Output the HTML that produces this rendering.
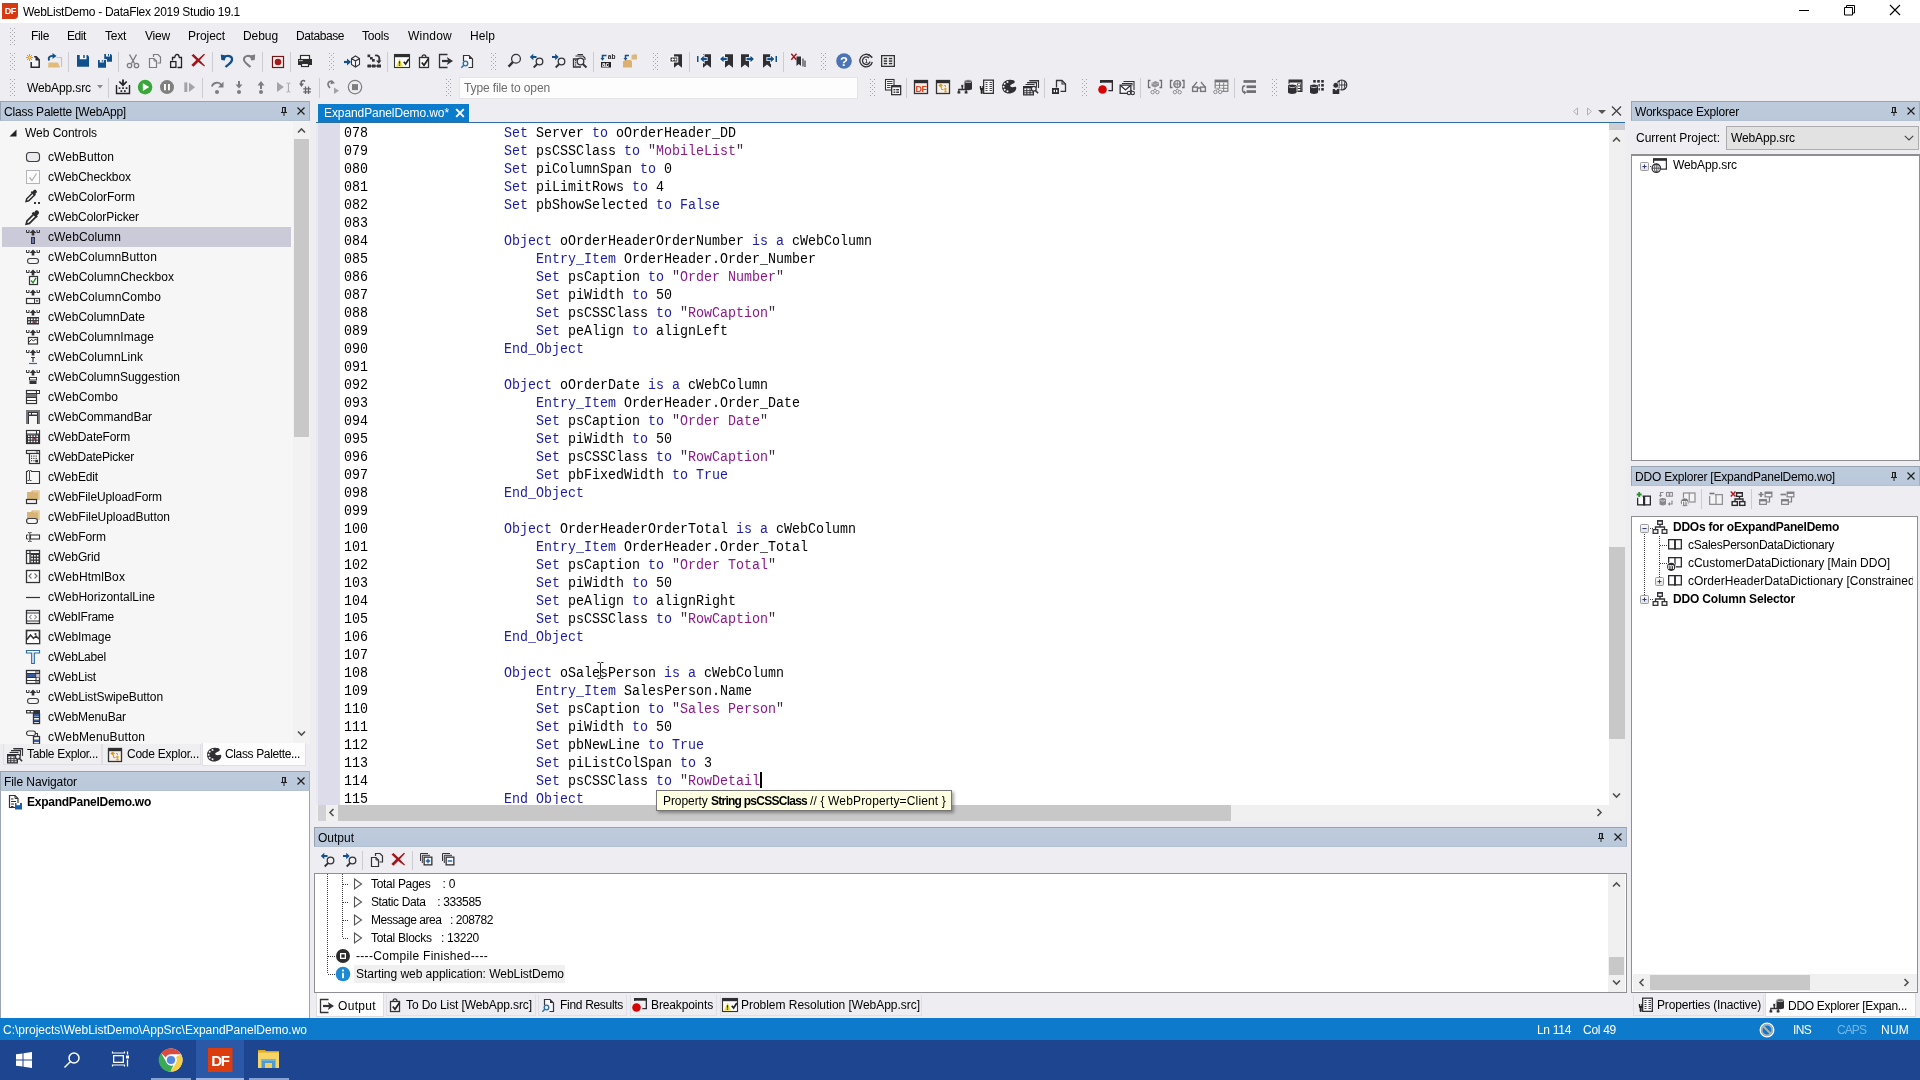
<!DOCTYPE html>
<html lang="en"><head><meta charset="utf-8"><title>WebListDemo - DataFlex 2019 Studio 19.1</title>
<style>
html,body{margin:0;padding:0;}
body{width:1920px;height:1080px;overflow:hidden;position:relative;background:#eeeef2;font-family:"Liberation Sans",sans-serif;font-size:12px;color:#000;}
#app{position:absolute;left:0;top:0;width:1920px;height:1080px;will-change:transform;}
.b{position:absolute;box-sizing:border-box;}
.t{position:absolute;white-space:pre;color:#000;}
.i{position:absolute;overflow:visible;}
.m{position:absolute;white-space:pre;font-family:"Liberation Mono",monospace;}
.code{font-family:"Liberation Mono",monospace;font-size:13.333px;line-height:18px;white-space:pre;color:#000;}
.ln{height:18px;transform:scaleY(1.12);transform-origin:0 12.6px;}
.k{color:#1c1ca0;}
.q{color:#3a2a3a;}
.s{color:#8a1a8a;}
.hdr{background:linear-gradient(#becbdd,#b9c8da);border:1px solid #98a3b1;border-bottom-color:#b3c0d0;border-right-color:#a4afbe;}
.grip{position:absolute;}
.sep{position:absolute;width:1px;background:#cbcbd1;}
</style></head>
<body>
<div id="app">
<svg width="0" height="0" style="position:absolute"><defs><pattern id="gp" width="4" height="4" patternUnits="userSpaceOnUse"><rect x="0" y="0" width="1" height="1" fill="#a4a4aa"/><rect x="2" y="2" width="1" height="1" fill="#a4a4aa"/></pattern></defs></svg>
<div class="b" style="left:0px;top:0px;width:1920px;height:23px;background:#fff;"></div>
<svg class="i" style="left:2.0px;top:3.0px;" width="16" height="16" viewBox="0 0 16 16"><path d="M0 0h16v12.500c0 2-1.500 3.500-3.500 3.500h-12.500z" fill="#d63a12"/><text x="8.200" y="10.800" font-family="Liberation Sans, sans-serif" font-size="9" font-weight="bold" fill="#fff" text-anchor="middle" letter-spacing="-.6">DF</text></svg>
<span class="t" style="left:23px;top:3.84px;font-size:12px;line-height:16px;letter-spacing:-0.279px;">WebListDemo - DataFlex 2019 Studio 19.1</span>
<svg class="i" style="left:1780px;top:0" width="140" height="23" viewBox="0 0 140 23"><path d="M19 10.5h10" stroke="#000" stroke-width="1" fill="none"/><path d="M64.5 7.5h8v7.500h-8z M66.500 7.500v-2h8v7.500h-2" stroke="#000" stroke-width="1" fill="none"/><path d="M110 5l10 10M120 5l-10 10" stroke="#000" stroke-width="1.1" fill="none"/></svg>
<svg class="grip" style="left:10px;top:28px" width="5" height="17"><rect width="5" height="17" fill="url(#gp)"/></svg>
<span class="t" style="left:31px;top:27.84px;font-size:12px;line-height:16px;letter-spacing:-0.334px;">File</span>
<span class="t" style="left:67px;top:27.84px;font-size:12px;line-height:16px;letter-spacing:-0.419px;">Edit</span>
<span class="t" style="left:105px;top:27.84px;font-size:12px;line-height:16px;letter-spacing:-0.252px;">Text</span>
<span class="t" style="left:145px;top:27.84px;font-size:12px;line-height:16px;letter-spacing:-0.198px;">View</span>
<span class="t" style="left:188px;top:27.84px;font-size:12px;line-height:16px;letter-spacing:-0.050px;">Project</span>
<span class="t" style="left:243px;top:27.84px;font-size:12px;line-height:16px;letter-spacing:-0.072px;">Debug</span>
<span class="t" style="left:296px;top:27.84px;font-size:12px;line-height:16px;letter-spacing:-0.421px;">Database</span>
<span class="t" style="left:362px;top:27.84px;font-size:12px;line-height:16px;letter-spacing:-0.203px;">Tools</span>
<span class="t" style="left:408px;top:27.84px;font-size:12px;line-height:16px;letter-spacing:0.220px;">Window</span>
<span class="t" style="left:470px;top:27.84px;font-size:12px;line-height:16px;letter-spacing:0.080px;">Help</span>
<svg class="grip" style="left:10px;top:53px" width="5" height="17"><rect width="5" height="17" fill="url(#gp)"/></svg>
<svg class="i" style="left:25.0px;top:53.0px;" width="16" height="16" viewBox="0 0 16 16"><path d="M6.200 9v5.300h8v-7.500l-3-3h-2" stroke="#26262c" stroke-width="1.5" fill="#f4f4f8" /><path d="M10.500 3.500l4 4h-4z" fill="#26262c"/><path d="M4.5 1.0v7M1.0 4.5h7M2.0 2.0l5 5M7.0 2.0l-5 5" stroke="#d9952a" stroke-width="1" fill="none" /><circle cx="4.5" cy="4.5" r="1" fill="#fff3d0"/></svg>
<svg class="i" style="left:47.0px;top:53.0px;" width="16" height="16" viewBox="0 0 16 16"><path d="M9.500 4.500h5v9.500" stroke="#d9c09a" stroke-width="1.2" fill="none" /><path d="M1.500 9.500h9.500l2 5h-12z" fill="#e0bb7a"/><path d="M2.300 7.500c-2-3.500 1.500-5 4.500-4.500" stroke="#10508f" stroke-width="1.8" fill="none" /><path d="M5.500 0l4 3l-4 3z" fill="#10508f"/></svg>
<div class="sep" style="left:68px;top:52px;height:20px"></div>
<svg class="i" style="left:75.0px;top:53.0px;" width="16" height="16" viewBox="0 0 16 16"><path d="M2 2h10.500l1.500 1.500v10.300h-12z" fill="#10508f"/><rect x="4.75" y="2" width="6.75" height="4.25" fill="#f4f6fa"/><rect x="8.25" y="2" width="1.5" height="3" fill="#10508f"/></svg>
<svg class="i" style="left:97.0px;top:53.0px;" width="16" height="16" viewBox="0 0 16 16"><path d="M7.250 1h6.500l1.250 1.250v6.500h-7.750z" fill="#10508f"/><rect x="9" y="1" width="4" height="2.5" fill="#f4f6fa"/><rect x="11" y="1" width="1" height="1.8" fill="#10508f"/><path d="M.5 6.500h9v8.500" stroke="#eeeef2" stroke-width="1" fill="none" /><path d="M1 7h6.750l1.250 1.250v6.500h-8z" fill="#10508f"/><rect x="2.75" y="7" width="4" height="2.5" fill="#f4f6fa"/><rect x="4.75" y="7" width="1" height="1.8" fill="#10508f"/></svg>
<div class="sep" style="left:118px;top:52px;height:20px"></div>
<svg class="i" style="left:125.0px;top:53.0px;" width="16" height="16" viewBox="0 0 16 16"><path d="M4.500 1.500l5 9M11.500 1.500l-5 9" stroke="#7d7d80" stroke-width="1.4" fill="none" /><circle cx="4.5" cy="12.5" r="2.2" fill="none" stroke="#7d7d80" stroke-width="1.3"/><circle cx="11.5" cy="12.5" r="2.2" fill="none" stroke="#7d7d80" stroke-width="1.3"/></svg>
<svg class="i" style="left:147.0px;top:53.0px;" width="16" height="16" viewBox="0 0 16 16"><path d="M6.500 4v-2.500h4.500l2.500 2.500v6h-3" stroke="#7d7d80" stroke-width="1.2" fill="none" /><path d="M2.500 5.500h4.500l2.500 2.500v6.500h-7z" stroke="#7d7d80" stroke-width="1.2" fill="#f2f2f6" /><path d="M7 5.500v2.500h2.500" stroke="#7d7d80" stroke-width="1" fill="none" /></svg>
<svg class="i" style="left:168.0px;top:53.0px;" width="16" height="16" viewBox="0 0 16 16"><path d="M7 4.500h-2.500v3M11 4.500h2.500v10h-4" stroke="#222226" stroke-width="1.3" fill="none" /><path d="M7 4.500v-1a2 2 0 0 1 4 0v1" stroke="#222226" stroke-width="1.3" fill="none" /><rect x="2.6" y="8.6" width="5.3" height="5.8" fill="none" stroke="#222226" stroke-width="1.3"/></svg>
<svg class="i" style="left:190.0px;top:53.0px;" width="16" height="16" viewBox="0 0 16 16"><path d="M1.500 2.500l2-1.500l5 4.800l5.500-5l1 .8l-5.200 5.700l5.200 5.500l-.8.800l-6-4.700l-4.700 4.800l-2.200-1.700l5-5z" fill="#a3151a"/></svg>
<div class="sep" style="left:212px;top:52px;height:20px"></div>
<svg class="i" style="left:219.0px;top:53.0px;" width="16" height="16" viewBox="0 0 16 16"><path d="M5 4.500c3.500-3 8.500-1.500 8 2.500c-.4 3-4 4.500-6.500 7" stroke="#10508f" stroke-width="2.2" fill="none" /><path d="M1.800 1.500l5.200 1l-1.200 5l-3.500-.5z" fill="#10508f"/></svg>
<svg class="i" style="left:241.0px;top:53.0px;" width="16" height="16" viewBox="0 0 16 16"><path d="M11 4.500c-3.500-3-8.500-1.500-8 2.500c.4 3 4 4.500 6.500 7" stroke="#7d7d80" stroke-width="2" fill="none" /><path d="M14.200 1.500l-5.200 1l1.200 5l3.500-.5z" fill="#7d7d80"/></svg>
<div class="sep" style="left:262px;top:52px;height:20px"></div>
<svg class="i" style="left:269.0px;top:53.0px;" width="16" height="16" viewBox="0 0 16 16"><rect x="3.5" y="3.5" width="11" height="11" fill="#fbeeee" stroke="#6e1518" stroke-width="1.2"/><circle cx="9" cy="9" r="3.3" fill="#a81a1a"/></svg>
<div class="sep" style="left:290px;top:52px;height:20px"></div>
<svg class="i" style="left:297.0px;top:53.0px;" width="16" height="16" viewBox="0 0 16 16"><rect x="3.5" y="2.5" width="9" height="4" fill="#fff" stroke="#2d2d30" stroke-width="1.2"/><rect x="1" y="6" width="14" height="6" fill="#2d2d30"/><rect x="4.5" y="10.5" width="7" height="3" fill="#fff" stroke="#2d2d30" stroke-width="1.2"/><rect x="2.3" y="7" width="1.2" height="1.2" fill="#fff"/><rect x="4.3" y="7" width="1.2" height="1.2" fill="#fff"/></svg>
<svg class="grip" style="left:329px;top:53px" width="5" height="17"><rect width="5" height="17" fill="url(#gp)"/></svg>
<svg class="i" style="left:344.0px;top:53.0px;" width="16" height="16" viewBox="0 0 16 16"><path d="M0 9h4" stroke="#10508f" stroke-width="2.2" fill="none" /><path d="M3 5.500l4 3.500l-4 3.500z" fill="#10508f"/><path d="M7.500 5.500l4-2.500l4 2.500v6l-4 2.500l-4-2.500z M7.500 5.500l4 2.500l4-2.500M11.500 8v6" stroke="#333337" stroke-width="1.1" fill="#f8f8fa" /></svg>
<svg class="i" style="left:366.0px;top:53.0px;" width="16" height="16" viewBox="0 0 16 16"><rect x="1.5" y="1.5" width="2.7" height="2.7" fill="#333337"/><rect x="4" y="4" width="2.7" height="2.5" fill="#333337"/><rect x="6" y="6" width="2.7" height="2.7" fill="#333337"/><rect x="1.5" y="11.5" width="3.5" height="3" fill="#333337"/><rect x="6" y="11.5" width="3.5" height="3" fill="#333337"/><rect x="11" y="11.5" width="4" height="3" fill="#333337"/><path d="M1.500 13h13" stroke="#333337" stroke-width="1.2" fill="none" /><path d="M9 2.500c4-1 5 2.500 4 5.500" stroke="#333337" stroke-width="1.8" fill="none" /><path d="M10 7.500h5.500l-2.700 3.300z" fill="#333337"/></svg>
<div class="sep" style="left:387px;top:52px;height:20px"></div>
<svg class="i" style="left:394.0px;top:53.0px;" width="16" height="16" viewBox="0 0 16 16"><rect x="0.5" y="1.5" width="15" height="13" fill="#fdfdfd" stroke="#333337" stroke-width="1.1"/><rect x="0.5" y="1.5" width="15" height="2.7" fill="#2d2d30"/><path d="M2 13.500l3.500-8l3.500 8z" fill="#efe33a"/><path d="M5.500 8.300v2.400M5.500 11.600v1.100" stroke="#222" stroke-width="1.3" fill="none" /><path d="M9.800 8.800l1.800 2.200l3.200-5" stroke="#222" stroke-width="1.7" fill="none" /></svg>
<svg class="i" style="left:416.0px;top:53.0px;" width="16" height="16" viewBox="0 0 16 16"><rect x="3.5" y="4.5" width="9" height="10" fill="#f8f8fa" stroke="#333337" stroke-width="1.3"/><path d="M6 4.500c0-3.500 4-3.500 4 0" stroke="#333337" stroke-width="1.3" fill="none" /><path d="M5.800 9.500l2.200 2.800l4.600-6.800" stroke="#222" stroke-width="1.7" fill="none" /></svg>
<svg class="i" style="left:438.0px;top:53.0px;" width="16" height="16" viewBox="0 0 16 16"><path d="M9.500 1.500h-8v13h8" stroke="#333337" stroke-width="1.3" fill="none" /><path d="M4 8h7" stroke="#333337" stroke-width="2.2" fill="none" /><path d="M8.800 4l6.200 4l-6.200 4l1.500-4z" fill="#333337"/></svg>
<svg class="i" style="left:459.0px;top:53.0px;" width="16" height="16" viewBox="0 0 16 16"><path d="M4.500 8v-5.500h5.500l3.500 3.500v8.500h-4" stroke="#333337" stroke-width="1.2" fill="#f8f8fa" /><path d="M10 2.500l3.500 3.500h-3.500z" fill="#333337"/><circle cx="6.5" cy="10.5" r="2.3" fill="#eaf2fb" stroke="#2a6aa8" stroke-width="1.3"/><path d="M4.800 12.200l-2.500 2.500" stroke="#2a6aa8" stroke-width="1.5" fill="none" /></svg>
<svg class="grip" style="left:491px;top:53px" width="5" height="17"><rect width="5" height="17" fill="url(#gp)"/></svg>
<svg class="i" style="left:506.0px;top:53.0px;" width="16" height="16" viewBox="0 0 16 16"><circle cx="10" cy="5.75" r="4.4" fill="none" stroke="#333337" stroke-width="1.3"/><path d="M6.800 9.200l-4.300 4.500" stroke="#333337" stroke-width="2.4" fill="none" /></svg>
<svg class="i" style="left:529.0px;top:53.0px;" width="16" height="16" viewBox="0 0 16 16"><circle cx="10.5" cy="8.5" r="3.3" fill="none" stroke="#333337" stroke-width="1.3"/><path d="M8.200 11l-3.500 3.500" stroke="#333337" stroke-width="1.8" fill="none" /><path d="M3 4h4.500" stroke="#10508f" stroke-width="2" fill="none" /><path d="M4.300 .8l-3.500 3.200l3.500 3.200z" fill="#10508f"/></svg>
<svg class="i" style="left:551.0px;top:53.0px;" width="16" height="16" viewBox="0 0 16 16"><circle cx="10.5" cy="8.5" r="3.3" fill="none" stroke="#333337" stroke-width="1.3"/><path d="M8.200 11l-3.500 3.500" stroke="#333337" stroke-width="1.8" fill="none" /><path d="M1 4h4" stroke="#10508f" stroke-width="2" fill="none" /><path d="M4.200 .8l3.500 3.200l-3.500 3.200z" fill="#10508f"/></svg>
<svg class="i" style="left:572.0px;top:53.0px;" width="16" height="16" viewBox="0 0 16 16"><path d="M5.500 1.500h5.500M3.500 3h7.500l2 2v2" stroke="#333337" stroke-width="1.1" fill="none" /><path d="M9 14h-7.500v-8h5" stroke="#333337" stroke-width="1.3" fill="none" /><rect x="3" y="7" width="1.2" height="1.2" fill="#333337"/><rect x="3" y="9.2" width="1.2" height="1.2" fill="#333337"/><rect x="3" y="11.4" width="1.2" height="1.2" fill="#333337"/><circle cx="8.5" cy="8.5" r="3.3" fill="#eeeef2" stroke="#333337" stroke-width="1.3"/><path d="M10.800 11l3.700 3.500" stroke="#333337" stroke-width="2" fill="none" /></svg>
<div class="sep" style="left:593px;top:52px;height:20px"></div>
<svg class="i" style="left:600.0px;top:53.0px;" width="16" height="16" viewBox="0 0 16 16"><rect x="1" y="9" width="10" height="5.5" fill="#222226"/><text x="2" y="13.6" font-family="Liberation Sans, sans-serif" font-size="6.5" font-weight="bold" fill="#fff" text-anchor="start">ac</text><text x="7.8" y="5.5" font-family="Liberation Sans, sans-serif" font-size="6.5" font-weight="bold" fill="#222226" text-anchor="start">ab</text><path d="M6.500 2.500h-4v3" stroke="#10508f" stroke-width="1.6" fill="none" /><path d="M.5 5l2 2.800l2-2.800z" fill="#10508f"/></svg>
<svg class="i" style="left:622.0px;top:53.0px;" width="16" height="16" viewBox="0 0 16 16"><path d="M9.500 2.500l1.500-1h4v5h-5.500z" fill="#d9b87f"/><path d="M11.500 1.500c.5-1 2.500-1 3 .3" stroke="#e8d9a8" stroke-width="1" fill="none" /><path d="M1 8.500l2-1.500h6l1 1.500v6h-9z" fill="#dcb070"/><path d="M7 2.500h-3.500v3" stroke="#10508f" stroke-width="1.5" fill="none" /><path d="M1.500 5l2 2.600l2-2.600z" fill="#10508f"/></svg>
<svg class="grip" style="left:653px;top:53px" width="5" height="17"><rect width="5" height="17" fill="url(#gp)"/></svg>
<svg class="i" style="left:668.0px;top:53.0px;" width="16" height="16" viewBox="0 0 16 16"><path d="M6 1.250h8v13.500l-4-3.300l-4 3.300z" fill="#2f2f33"/><rect x="2" y="4" width="7.75" height="5" fill="#2f2f33" stroke="#fff" stroke-width="1"/><path d="M3.200 6.500l2-1.800v1.200h1v1.200h-1v1.200z" fill="#fff"/><rect x="6.7" y="5.5" width="1.8" height="2" fill="#fff"/></svg>
<div class="sep" style="left:689px;top:52px;height:20px"></div>
<svg class="i" style="left:696.0px;top:53.0px;" width="16" height="16" viewBox="0 0 16 16"><path d="M7 1.250h8v13.500l-4-3.300l-4 3.300z" fill="#2f2f33"/><path d="M4.25 6l3.500-3.300v2h3.0v2.600h-3.0v2z" stroke="#fff" stroke-width="1.6" fill="#fff" /><path d="M4.25 6l3.500-3.300v2h3.0v2.600h-3.0v2z" fill="#10508f"/><rect x="1" y="3" width="1.5" height="6" fill="#10508f"/></svg>
<svg class="i" style="left:718.0px;top:53.0px;" width="16" height="16" viewBox="0 0 16 16"><path d="M7 1.250h8v13.500l-4-3.300l-4 3.300z" fill="#2f2f33"/><path d="M2 6l3.500-3.300v2h3.25v2.600h-3.25v2z" stroke="#fff" stroke-width="1.6" fill="#fff" /><path d="M2 6l3.500-3.300v2h3.25v2.600h-3.25v2z" fill="#10508f"/></svg>
<svg class="i" style="left:740.0px;top:53.0px;" width="16" height="16" viewBox="0 0 16 16"><path d="M1 1.250h8v13.500l-4-3.300l-4 3.300z" fill="#2f2f33"/><path d="M14 6l-3.500-3.300v2h-4.0v2.600h4.0v2z" stroke="#fff" stroke-width="1.6" fill="#fff" /><path d="M14 6l-3.500-3.300v2h-4.0v2.600h4.0v2z" fill="#10508f"/></svg>
<svg class="i" style="left:762.0px;top:53.0px;" width="16" height="16" viewBox="0 0 16 16"><path d="M1 1.250h8v13.500l-4-3.300l-4 3.300z" fill="#2f2f33"/><path d="M12.4 6l-3.500-3.300v2h-3.6500000000000004v2.600h3.6500000000000004v2z" stroke="#fff" stroke-width="1.6" fill="#fff" /><path d="M12.4 6l-3.500-3.300v2h-3.6500000000000004v2.600h3.6500000000000004v2z" fill="#10508f"/><rect x="13.5" y="3" width="1.5" height="6" fill="#10508f"/></svg>
<div class="sep" style="left:783px;top:52px;height:20px"></div>
<svg class="i" style="left:790.0px;top:53.0px;" width="16" height="16" viewBox="0 0 16 16"><path d="M6.500 3.500h4.500v9.500l-2.200-2l-2.300 2z" fill="#2f2f33"/><path d="M13 5.500v8M15 7.500v6.500" stroke="#2f2f33" stroke-width="1.1" fill="none" /><path d="M1.300 .8l5 6M6.500 .8l-5.200 6" stroke="#a3151a" stroke-width="1.4" fill="none" /></svg>
<svg class="grip" style="left:821px;top:53px" width="5" height="17"><rect width="5" height="17" fill="url(#gp)"/></svg>
<svg class="i" style="left:836.0px;top:53.0px;" width="16" height="16" viewBox="0 0 16 16"><circle cx="8" cy="8" r="7.8" fill="#4a74b4"/><text x="8" y="12.7" font-family="Liberation Sans, sans-serif" font-size="13" font-weight="bold" fill="#fff" text-anchor="middle">?</text></svg>
<svg class="i" style="left:858.0px;top:53.0px;" width="16" height="16" viewBox="0 0 16 16"><path d="M12.500 3a6.300 6.300 0 1 0 1.800 6" stroke="#333337" stroke-width="1.3" fill="none" /><path d="M11 5a3.800 3.800 0 1 0 1 3.500" stroke="#333337" stroke-width="1.3" fill="none" /><path d="M10.500 1.500l3.800 3.200" stroke="#333337" stroke-width="1.6" fill="none" /><text x="8.3" y="10.2" font-family="Liberation Sans, sans-serif" font-size="5.5" font-weight="bold" fill="#333337" text-anchor="middle">1</text></svg>
<svg class="i" style="left:880.0px;top:53.0px;" width="16" height="16" viewBox="0 0 16 16"><rect x="1.65" y="2.65" width="12.7" height="10.7" fill="#fafafc" stroke="#333337" stroke-width="1.3"/><rect x="3.7" y="4.8" width="3.5" height="1.5" fill="#333337"/><rect x="3.7" y="7.3" width="3.5" height="1.5" fill="#333337"/><rect x="3.7" y="9.8" width="3.5" height="1.5" fill="#333337"/><rect x="8.8" y="4.8" width="3.5" height="1.5" fill="#333337"/><rect x="8.8" y="7.3" width="3.5" height="1.5" fill="#333337"/><rect x="8.8" y="9.8" width="3.5" height="1.5" fill="#333337"/></svg>
<svg class="grip" style="left:10px;top:79px" width="5" height="17"><rect width="5" height="17" fill="url(#gp)"/></svg>
<span class="t" style="left:27px;top:79.84px;font-size:12px;line-height:16px;letter-spacing:-0.114px;">WebApp.src</span>
<svg class="i" style="left:97px;top:85px" width="6" height="4" viewBox="0 0 6 4"><path d="M0 0h6l-3 3.5z" fill="#8a8a8a"/></svg>
<div class="sep" style="left:108px;top:78px;height:20px"></div>
<svg class="i" style="left:115.0px;top:79.0px;" width="16" height="16" viewBox="0 0 16 16"><path d="M1.500 6v8.500h13v-8.500" stroke="#222226" stroke-width="1.4" fill="none" /><path d="M8 .5v5" stroke="#222226" stroke-width="1.8" fill="none" /><path d="M4.300 2.500l3.700 3.700l3.700-3.700" stroke="#222226" stroke-width="1.7" fill="none" /><rect x="3.7" y="8.3" width="1.7" height="1.7" fill="#222226"/><rect x="7.2" y="8.3" width="1.7" height="1.7" fill="#222226"/><rect x="10.7" y="8.3" width="1.7" height="1.7" fill="#222226"/><rect x="5.5" y="11.2" width="1.7" height="1.7" fill="#222226"/><rect x="9" y="11.2" width="1.7" height="1.7" fill="#222226"/></svg>
<svg class="i" style="left:137.0px;top:79.0px;" width="16" height="16" viewBox="0 0 16 16"><circle cx="8.1" cy="8.1" r="7.3" fill="#39a639"/><path d="M5.800 4.200l6.400 3.900l-6.400 3.900z" fill="#fff"/></svg>
<svg class="i" style="left:159.0px;top:79.0px;" width="16" height="16" viewBox="0 0 16 16"><circle cx="8" cy="8.1" r="7" fill="#7f7f7f"/><rect x="5" y="5" width="1.9" height="6.3" fill="#fff"/><rect x="9" y="5" width="1.9" height="6.3" fill="#fff"/></svg>
<svg class="i" style="left:181.0px;top:79.0px;" width="16" height="16" viewBox="0 0 16 16"><rect x="3.3" y="3.4" width="3" height="9.6" fill="#a4a4a7"/><path d="M8 3.400l6 4.800l-6 4.800z" fill="#a4a4a7"/></svg>
<div class="sep" style="left:202px;top:78px;height:20px"></div>
<svg class="i" style="left:209.0px;top:79.0px;" width="16" height="16" viewBox="0 0 16 16"><path d="M2.800 7.500c1.500-4.500 7.500-5 9.500-1.500" stroke="#7d7d80" stroke-width="1.8" fill="none" /><path d="M14.500 2.500v6h-5.500z" fill="#7d7d80"/><circle cx="8" cy="13.1" r="2" fill="#7d7d80"/></svg>
<svg class="i" style="left:231.0px;top:79.0px;" width="16" height="16" viewBox="0 0 16 16"><path d="M8 2v6" stroke="#7d7d80" stroke-width="2" fill="none" /><path d="M4.500 5.500h7l-3.500 4z" fill="#7d7d80"/><circle cx="8" cy="13.1" r="2" fill="#7d7d80"/></svg>
<svg class="i" style="left:253.0px;top:79.0px;" width="16" height="16" viewBox="0 0 16 16"><path d="M8 5v5" stroke="#7d7d80" stroke-width="2" fill="none" /><path d="M4.500 6.500h7l-3.500-4.500z" fill="#7d7d80"/><circle cx="8" cy="13.1" r="2" fill="#7d7d80"/></svg>
<svg class="i" style="left:276.0px;top:79.0px;" width="16" height="16" viewBox="0 0 16 16"><path d="M1 3l6.800 5l-6.800 5z" fill="#a4a4a7"/><path d="M10.500 4h1.300l.600.600l.600-.600h1.300M12.400 4.500v8M10.500 13h1.300l.600-.600l.600.600h1.300" stroke="#a4a4a7" stroke-width="1" fill="none" /></svg>
<svg class="i" style="left:297.0px;top:79.0px;" width="16" height="16" viewBox="0 0 16 16"><path d="M8.500 7.500v7.500M11.500 7.500v7.500M6.250 9.800h7.750M6.250 12.800h7.750" stroke="#66666a" stroke-width="1.3" fill="none" /><path d="M8 2.500c-1.500-2-5-.5-3.500 3" stroke="#66666a" stroke-width="1.5" fill="none" /><path d="M2 4.500h5l-2.500 3.500z" fill="#66666a"/></svg>
<div class="sep" style="left:319px;top:78px;height:20px"></div>
<svg class="i" style="left:324.0px;top:79.0px;" width="16" height="16" viewBox="0 0 16 16"><path d="M9 3.500c-3-3-7.500.5-3 5.500" stroke="#7d7d80" stroke-width="1.7" fill="none" /><path d="M7.500 .8l3.500 3.500l-4.500 1z" fill="#7d7d80"/><path d="M10 8.500l5 3.300l-5 3.300z" fill="#a4a4a7"/></svg>
<svg class="i" style="left:347.0px;top:79.0px;" width="16" height="16" viewBox="0 0 16 16"><circle cx="8" cy="8.1" r="6.7" fill="none" stroke="#7d7d80" stroke-width="1.2"/><rect x="5" y="5.1" width="6" height="6" fill="#7d7d80"/></svg>
<svg class="grip" style="left:446px;top:79px" width="5" height="17"><rect width="5" height="17" fill="url(#gp)"/></svg>
<svg class="grip" style="left:870px;top:79px" width="5" height="17"><rect width="5" height="17" fill="url(#gp)"/></svg>
<svg class="i" style="left:885.0px;top:79.0px;" width="16" height="16" viewBox="0 0 16 16"><rect x="0.5" y="0.5" width="8.5" height="10.5" fill="#fafafc" stroke="#333337" stroke-width="1.1"/><path d="M2 2.500h5.500M2 4.500h5.500M2 6.500h3.500M2 8.500h3.500" stroke="#444448" stroke-width="1" fill="none" /><rect x="6.65" y="6.65" width="9" height="9" fill="#fafafc" stroke="#333337" stroke-width="1.3"/><rect x="6.65" y="6.65" width="9" height="1.7" fill="#333337"/><rect x="8.5" y="10" width="1.8" height="1.4" fill="#333337"/><rect x="11.2" y="10" width="2.8" height="1.4" fill="#333337"/><rect x="8.5" y="12.5" width="1.8" height="1.4" fill="#333337"/><rect x="11.2" y="12.5" width="2.8" height="1.4" fill="#333337"/></svg>
<div class="sep" style="left:906px;top:78px;height:20px"></div>
<svg class="i" style="left:913.0px;top:79.0px;" width="16" height="16" viewBox="0 0 16 16"><rect x="1.5" y="1.5" width="13" height="13" fill="#fbe9e4" stroke="#333337" stroke-width="1.3"/><rect x="1.5" y="1.5" width="13" height="2.7" fill="#2d2d30"/><text x="8" y="12.800" font-family="Liberation Sans, sans-serif" font-size="9" font-weight="bold" fill="#d9431e" text-anchor="middle" letter-spacing="-.6">DF</text></svg>
<svg class="i" style="left:935.0px;top:79.0px;" width="16" height="16" viewBox="0 0 16 16"><rect x="1.5" y="1.5" width="13" height="13" fill="#f8efe6" stroke="#333337" stroke-width="1.3"/><rect x="1.5" y="1.5" width="13" height="2.7" fill="#2d2d30"/><path d="M3.500 6.500l2-2l2.500 2l-2.500 2z" fill="#d19a2a"/><path d="M8.500 10l2-1.500l1.500 1.500l-1.500 1.500z" fill="#d6a83c"/><path d="M6.500 8v2.500h2M10.500 8v-1.500h-1.500M10.500 11.500v1.500" stroke="#c9a04a" stroke-width="1" fill="none" /><circle cx="10.5" cy="12.5" r="1.2" fill="#d6a83c"/></svg>
<svg class="i" style="left:957.0px;top:79.0px;" width="16" height="16" viewBox="0 0 16 16"><path d="M7.500 2v8c0 1.500 7.500 1.500 7.500 0v-8z" fill="#2f2f33"/><ellipse cx="11.250" cy="2.200" rx="3.700" ry="1.400" fill="#606064" stroke="#eeeef2" stroke-width=".6"/><rect x="4" y="5.7" width="2.6" height="2.6" fill="#2f2f33" stroke="#eeeef2" stroke-width="0.6"/><path d="M5.300 8v2.500M1.800 13v-2.500h7.400v2.500" stroke="#2f2f33" stroke-width="1.3" fill="none" /><rect x="0.5" y="12.3" width="2.8" height="2.2" fill="#2f2f33"/><rect x="7.7" y="12.3" width="2.8" height="2.2" fill="#2f2f33"/></svg>
<svg class="i" style="left:979.0px;top:79.0px;" width="16" height="16" viewBox="0 0 16 16"><rect x="4.65" y="1.15" width="9.7" height="13.2" fill="#fafafc" stroke="#333337" stroke-width="1.3"/><path d="M6.500 3.500h2M10.500 3.500h2.500M6.500 5.500h2M10.500 5.500h2.500M6.500 7.500h2M10.500 7.500h2.500M6.500 9.500h2M10.500 9.500h2.500M6.500 11.500h2M10.500 11.500h2.500" stroke="#444448" stroke-width="1" fill="none" /><path d="M1.500 7v2.500M4 7v2.500" stroke="#222" stroke-width="1.4" fill="none" /><path d="M1 9h3.500v1.500l-.800.800v3.200l-1 .5l-1-.5v-3.200l-.700-.800z" fill="#222"/></svg>
<svg class="i" style="left:1001.0px;top:79.0px;" width="16" height="16" viewBox="0 0 16 16"><path d="M8.500 .8c3 0 5.500.7 5.300 2.200c-.2 1.500-2.500 1.800-4.300 3c-1 1 .5 2.300 2 2.300c1.500 0 3.800-1.500 3.800 .8c0 3-3.300 5.500-7.300 5.500c-4 0-7-3-7-6.900c0-3.900 3.500-6.900 7.500-6.900z" fill="#303034"/><circle cx="6.5" cy="3" r="1" fill="#f2f2f6"/><circle cx="3.7" cy="4.8" r="1" fill="#f2f2f6"/><circle cx="2.6" cy="7.8" r="1" fill="#f2f2f6"/><circle cx="3.7" cy="10.7" r="1" fill="#f2f2f6"/><circle cx="6.5" cy="12.3" r="1" fill="#f2f2f6"/></svg>
<svg class="i" style="left:1023.0px;top:79.0px;" width="16" height="16" viewBox="0 0 16 16"><path d="M6.500 1.500h9v7.500M4 3.500h9.500v5M2.500 5.500h9" stroke="#333337" stroke-width="1.1" fill="none" /><rect x="6.5" y="1" width="9.5" height="1.5" fill="#333337"/><rect x="4" y="3" width="10" height="1.3" fill="#333337"/><rect x="0.65" y="7.65" width="9.7" height="8.2" fill="#fafafc" stroke="#333337" stroke-width="1.3"/><rect x="0.65" y="7.15" width="9.7" height="2.2" fill="#2d2d30"/><path d="M.650 11.700h9.700M.650 13.800h9.700M3.800 9.500v6.500M7 9.500v6.500" stroke="#333337" stroke-width="1" fill="none" /><circle cx="10.8" cy="9.8" r="2.4" fill="#eeeef2" stroke="#333337" stroke-width="1.2"/><path d="M12.500 11.500l2.600 2.800" stroke="#333337" stroke-width="1.6" fill="none" /></svg>
<div class="sep" style="left:1044px;top:78px;height:20px"></div>
<svg class="i" style="left:1051.0px;top:79.0px;" width="16" height="16" viewBox="0 0 16 16"><path d="M5.500 8.500v-7h5.500l3.500 3.500v7.300h-5" stroke="#333337" stroke-width="1.3" fill="none" /><path d="M11 1.500v3.500h3.500" stroke="#333337" stroke-width="1.1" fill="none" /><rect x="1" y="9" width="7" height="6" fill="#2d2d30"/><path d="M4 10.500v3l-2-1.500z" fill="#fff"/><path d="M5 10.500v3l2-1.500z" fill="#fff"/></svg>
<svg class="grip" style="left:1082px;top:79px" width="5" height="17"><rect width="5" height="17" fill="url(#gp)"/></svg>
<svg class="i" style="left:1097.0px;top:79.0px;" width="16" height="16" viewBox="0 0 16 16"><path d="M3.650 4v-2.350h11.700v10h-4" stroke="#2d2d30" stroke-width="1.3" fill="none" /><rect x="3" y="1" width="13" height="2.7" fill="#2d2d30"/><circle cx="5.5" cy="10.5" r="4.3" fill="#d60505"/></svg>
<svg class="i" style="left:1119.0px;top:79.0px;" width="16" height="16" viewBox="0 0 16 16"><path d="M4.500 2.500h10.500v8.500M3 4.500h10v2" stroke="#333337" stroke-width="1.1" fill="none" /><rect x="1.15" y="6.15" width="10.7" height="8.2" fill="#fafafc" stroke="#333337" stroke-width="1.3"/><path d="M1.500 6.500l5 4.500l5-4.500" stroke="#333337" stroke-width="1.3" fill="none" /><circle cx="10" cy="14" r="1.7" fill="#eeeef2" stroke="#333337" stroke-width="1.1"/><circle cx="13.7" cy="14" r="1.7" fill="#eeeef2" stroke="#333337" stroke-width="1.1"/><path d="M10.500 12.300l1.300-1.300l1.300 1.300" stroke="#333337" stroke-width="1" fill="none" /></svg>
<div class="sep" style="left:1140px;top:78px;height:20px"></div>
<svg class="i" style="left:1147.0px;top:79.0px;" width="16" height="16" viewBox="0 0 16 16"><path d="M3.500 1.500h-2v7h2M12.500 1.500h2v7h-2" stroke="#6e6e72" stroke-width="1.3" fill="none" /><path d="M4.500 4l4-2l3.500 1.500v3l-4 2l-3.500-1.500z" fill="#909094"/><path d="M4.500 4l3.500 1.500l4-2" stroke="#c8c8cc" stroke-width="0.7" fill="none" /><circle cx="5.6" cy="13.2" r="1.7" fill="none" stroke="#8c8c90" stroke-width="1"/><circle cx="10.4" cy="13.2" r="1.7" fill="none" stroke="#8c8c90" stroke-width="1"/><path d="M6.5 11.7l1.500-2l1.500 2" stroke="#8c8c90" stroke-width="1" fill="none" /></svg>
<svg class="i" style="left:1169.0px;top:79.0px;" width="16" height="16" viewBox="0 0 16 16"><path d="M3.500 1.500h-2v7h2M13 1.500h2v7h-2" stroke="#6e6e72" stroke-width="1.3" fill="none" /><circle cx="8.25" cy="5" r="3.5" fill="none" stroke="#7a7a7e" stroke-width="1.1"/><path d="M4.750 5h7M8.250 1.500v7M6.500 2c-.8 2-.8 4 0 6M10 2c.8 2 .8 4 0 6" stroke="#7a7a7e" stroke-width="0.9" fill="none" /><circle cx="5.85" cy="13.2" r="1.7" fill="none" stroke="#8c8c90" stroke-width="1"/><circle cx="10.65" cy="13.2" r="1.7" fill="none" stroke="#8c8c90" stroke-width="1"/><path d="M6.75 11.7l1.500-2l1.500 2" stroke="#8c8c90" stroke-width="1" fill="none" /></svg>
<svg class="i" style="left:1191.0px;top:79.0px;" width="16" height="16" viewBox="0 0 16 16"><rect x="1.6" y="8.1" width="4.8" height="4.3" fill="none" stroke="#77777b" stroke-width="1.4"/><rect x="9.6" y="8.1" width="4.8" height="4.3" fill="none" stroke="#77777b" stroke-width="1.4"/><path d="M6.400 9h3.200M1.500 8.500l4.500-5.500M14.500 8.500l-4.500-5.500" stroke="#77777b" stroke-width="1.3" fill="none" /></svg>
<svg class="i" style="left:1213.0px;top:79.0px;" width="16" height="16" viewBox="0 0 16 16"><rect x="2.15" y="1.15" width="12.7" height="11.2" fill="#f6f6f8" stroke="#808084" stroke-width="1.2"/><rect x="2.15" y="1.15" width="12.7" height="2.2" fill="#707074"/><path d="M2 6.300h13M2 9.300h13M6.500 3.500v9M10.700 3.500v9" stroke="#808084" stroke-width="1" fill="none" /><rect x="0.5" y="9.5" width="8.5" height="5.5" fill="#eeeef2"/><circle cx="2.4" cy="13" r="1.7" fill="none" stroke="#8c8c90" stroke-width="1"/><circle cx="7.199999999999999" cy="13" r="1.7" fill="none" stroke="#8c8c90" stroke-width="1"/><path d="M3.3 11.5l1.500-2l1.500 2" stroke="#8c8c90" stroke-width="1" fill="none" /></svg>
<div class="sep" style="left:1234px;top:78px;height:20px"></div>
<svg class="i" style="left:1241.0px;top:79.0px;" width="16" height="16" viewBox="0 0 16 16"><rect x="2.5" y="1.1" width="12.5" height="2.7" fill="#6e6e72"/><rect x="5.5" y="6.4" width="9.5" height="2.7" fill="#6e6e72"/><rect x="5.5" y="11.25" width="9.5" height="2.7" fill="#6e6e72"/><path d="M4.200 7h-1c-1.700 0-1.700 1.500-1.700 3.500c0 2 .5 3 2 3" stroke="#6e6e72" stroke-width="1.4" fill="none" /><path d="M3 11.500l2.500 2l-2.500 2z" fill="#6e6e72"/></svg>
<svg class="grip" style="left:1272px;top:79px" width="5" height="17"><rect width="5" height="17" fill="url(#gp)"/></svg>
<svg class="i" style="left:1287.0px;top:79.0px;" width="16" height="16" viewBox="0 0 16 16"><rect x="2.15" y="1.15" width="12.7" height="11.2" fill="#fafafc" stroke="#2f2f33" stroke-width="1.3"/><rect x="2.15" y="1.15" width="12.7" height="2.4" fill="#2f2f33"/><rect x="10" y="4.5" width="4" height="7.5" fill="#2f2f33"/><rect x="10.8" y="5" width="2.5" height="1.5" fill="#fff"/><rect x="10.8" y="7.5" width="2.5" height="1.5" fill="#fff"/><rect x="10.8" y="10" width="2.5" height="1.5" fill="#fff"/><path d="M.5 6.500c0-2.500 9.500-2.500 9.500 0v7" stroke="#eeeef2" stroke-width="1" fill="none" /><path d="M1 6.9v6.7c0 1.800 8.5 1.800 8.5 0v-6.7z" fill="#2f2f33"/><ellipse cx="5.25" cy="7.0" rx="4.25" ry="1.500" fill="#2f2f33"/><path d="M1.8 7.7c1.500 1.200 5.4 1.200 6.9 0" stroke="#d8d8dc" stroke-width=".9" fill="none"/></svg>
<svg class="i" style="left:1309.0px;top:79.0px;" width="16" height="16" viewBox="0 0 16 16"><rect x="4.2" y="1" width="2.6" height="2.6" fill="#2f2f33"/><rect x="8.2" y="1" width="2.6" height="2.6" fill="#2f2f33"/><rect x="12.2" y="1" width="2.6" height="2.6" fill="#2f2f33"/><rect x="12.2" y="5" width="2.6" height="2.6" fill="#2f2f33"/><rect x="12.2" y="9" width="2.6" height="2.6" fill="#2f2f33"/><rect x="9.5" y="5" width="1.3" height="2.6" fill="#2f2f33"/><rect x="9.5" y="9" width="1.3" height="2.6" fill="#2f2f33"/><path d="M1 6.9v6.7c0 1.800 8 1.800 8 0v-6.7z" fill="#2f2f33"/><ellipse cx="5.0" cy="7.0" rx="4.0" ry="1.500" fill="#2f2f33"/><path d="M1.8 7.7c1.500 1.200 4.9 1.200 6.4 0" stroke="#d8d8dc" stroke-width=".9" fill="none"/></svg>
<svg class="i" style="left:1331.0px;top:79.0px;" width="16" height="16" viewBox="0 0 16 16"><circle cx="10.8" cy="6" r="5" fill="#f6f6f8" stroke="#2f2f33" stroke-width="1.2"/><path d="M5.800 6h10M10.800 1v10M8.800 1.500c-1.200 2.800-1.200 6.200 0 9M12.800 1.500c1.200 2.800 1.200 6.200 0 9" stroke="#2f2f33" stroke-width="0.9" fill="none" /><circle cx="4.8" cy="6.3" r="2.9" fill="#2f2f33" stroke="#eeeef2" stroke-width="0.8"/><path d="M1.500 15v-5h2.200l1.300 1.800l1.300-1.800h2.200v5z" fill="#2f2f33"/><path d="M1 15.500v-6h8v6" stroke="#eeeef2" stroke-width="0.8" fill="none" /></svg>
<div class="b" style="left:459px;top:77px;width:399px;height:22px;background:#fdfdfd;border:1px solid #e3e3e8;"></div>
<span class="t" style="left:464px;top:79.84px;font-size:12px;line-height:16px;letter-spacing:-0.121px;color:#6d6d6d;">Type file to open</span>
<div class="b hdr" style="left:0px;top:101px;width:310px;height:20px;"></div>
<span class="t" style="left:4px;top:103.84px;font-size:12px;line-height:16px;letter-spacing:-0.205px;">Class Palette [WebApp]</span>
<svg class="i" style="left:279.0px;top:106.0px;" width="10" height="10" viewBox="0 0 10 10"><path d="M3.5 1.5v4.5M6.5 1.5v4.5M3 1.5h4M2 6.5h6M5 6.5v3.5" stroke="#1e1e1e" stroke-width="1" fill="none" /><rect x="5.5" y="1.5" width="1.3" height="4.5" fill="#1e1e1e"/></svg>
<svg class="i" style="left:295.5px;top:105.5px;" width="10" height="10" viewBox="0 0 10 10"><path d="M1.5 1.5l7 7M8.5 1.5l-7 7" stroke="#1e1e1e" stroke-width="1.2" fill="none" /></svg>
<div class="b" style="left:0px;top:121px;width:310px;height:623px;background:#f6f6f6;"></div>
<svg class="i" style="left:8px;top:128px" width="10" height="10" viewBox="0 0 10 10"><path d="M8.5 1.5v7h-7z" fill="#222"/></svg>
<span class="t" style="left:25px;top:124.84px;font-size:12px;line-height:16px;letter-spacing:-0.040px;">Web Controls</span>
<div class="b" style="left:2px;top:227px;width:289px;height:20px;background:#cbcad9;"></div>
<svg class="i" style="left:25.0px;top:149.0px;" width="16" height="16" viewBox="0 0 16 16"><rect x="1.5" y="3.5" width="13" height="9" rx="3" fill="#ececf0" stroke="#3e3e42" stroke-width="1.100"/></svg>
<span class="t" style="left:48px;top:148.84px;font-size:12px;line-height:16px;letter-spacing:0.085px;">cWebButton</span>
<svg class="i" style="left:25.0px;top:169.0px;" width="16" height="16" viewBox="0 0 16 16"><rect x="1.5" y="1.5" width="13" height="13" fill="#fbfbfb" stroke="#b4b4b8" stroke-width="1"/><path d="M4.500 8.500l2.500 3l4.500-7" stroke="#b0b0b4" stroke-width="1.2" fill="none" /></svg>
<span class="t" style="left:48px;top:168.84px;font-size:12px;line-height:16px;letter-spacing:-0.068px;">cWebCheckbox</span>
<svg class="i" style="left:25.0px;top:189.0px;" width="16" height="16" viewBox="0 0 16 16"><g transform="translate(0 0) scale(0.85)"><path d="M10.300 1.300c1.800-1.800 5 1.400 3.200 3.200l-1.500 1.500l.9.9l-1.600 1.600l-4.600-4.600l1.600-1.600l.9.9z" fill="#2a2a2e"/><path d="M8.300 5.200l-6.300 6.300l-.8 3.200l3.200-.8l6.300-6.300" stroke="#2a2a2e" stroke-width="1.7" fill="none" /></g><rect x="9" y="13" width="2" height="2" fill="#333337"/><rect x="13" y="13" width="2" height="2" fill="#333337"/></svg>
<span class="t" style="left:48px;top:188.84px;font-size:12px;line-height:16px;letter-spacing:-0.010px;">cWebColorForm</span>
<svg class="i" style="left:25.0px;top:209.0px;" width="16" height="16" viewBox="0 0 16 16"><g transform="translate(0 0.5) scale(1)"><path d="M10.300 1.300c1.800-1.800 5 1.400 3.200 3.200l-1.500 1.500l.9.9l-1.600 1.600l-4.600-4.600l1.600-1.600l.9.9z" fill="#2a2a2e"/><path d="M8.300 5.200l-6.300 6.300l-.8 3.200l3.200-.8l6.300-6.300" stroke="#2a2a2e" stroke-width="1.7" fill="none" /></g></svg>
<span class="t" style="left:48px;top:208.84px;font-size:12px;line-height:16px;letter-spacing:-0.098px;">cWebColorPicker</span>
<svg class="i" style="left:25.0px;top:229.0px;" width="16" height="16" viewBox="0 0 16 16"><path d="M1.5 1v2.5h2.500v-2.500M12 1v2.500h2.500v-2.500" stroke="#333337" stroke-width="1" fill="none" /><path d="M8 .5l3.500 3.500h-2.200v2.500h-2.600v-2.500h-2.200z" fill="#333337"/><rect x="6.5" y="8.5" width="3" height="6" fill="#6c78b4" stroke="#333337" stroke-width="1"/></svg>
<span class="t" style="left:48px;top:228.84px;font-size:12px;line-height:16px;letter-spacing:0.119px;">cWebColumn</span>
<svg class="i" style="left:25.0px;top:249.0px;" width="16" height="16" viewBox="0 0 16 16"><path d="M1.5 1v2.5h2.500v-2.500M12 1v2.500h2.500v-2.500" stroke="#333337" stroke-width="1" fill="none" /><path d="M8 .5l3.500 3.500h-2.200v2.500h-2.600v-2.500h-2.200z" fill="#333337"/><rect x="2.5" y="9.500" width="11" height="5" rx="2.500" fill="#f6f6f6" stroke="#3e3e42" stroke-width="1.100"/></svg>
<span class="t" style="left:48px;top:248.84px;font-size:12px;line-height:16px;letter-spacing:0.156px;">cWebColumnButton</span>
<svg class="i" style="left:25.0px;top:269.0px;" width="16" height="16" viewBox="0 0 16 16"><path d="M1.5 1v2.5h2.500v-2.500M12 1v2.500h2.500v-2.500" stroke="#333337" stroke-width="1" fill="none" /><path d="M8 .5l3.500 3.500h-2.200v2.500h-2.600v-2.500h-2.200z" fill="#333337"/><rect x="4.5" y="7.5" width="8" height="8" fill="#fff" stroke="#333337" stroke-width="1.2"/><path d="M6 11.500l2 2.300l3-5" stroke="#2e8b2e" stroke-width="1.4" fill="none" /></svg>
<span class="t" style="left:48px;top:268.84px;font-size:12px;line-height:16px;letter-spacing:0.046px;">cWebColumnCheckbox</span>
<svg class="i" style="left:25.0px;top:289.0px;" width="16" height="16" viewBox="0 0 16 16"><path d="M1.5 1v2.5h2.500v-2.500M12 1v2.500h2.500v-2.500" stroke="#333337" stroke-width="1" fill="none" /><path d="M8 .5l3.500 3.500h-2.200v2.500h-2.600v-2.500h-2.200z" fill="#333337"/><rect x="1.5" y="9.5" width="13" height="5" fill="#fff" stroke="#333337" stroke-width="1.2"/><path d="M9.500 9.500v5" stroke="#333337" stroke-width="1" fill="none" /><path d="M10.500 11.200h3l-1.500 2z" fill="#333337"/></svg>
<span class="t" style="left:48px;top:288.84px;font-size:12px;line-height:16px;letter-spacing:0.167px;">cWebColumnCombo</span>
<svg class="i" style="left:25.0px;top:309.0px;" width="16" height="16" viewBox="0 0 16 16"><path d="M1.5 1v2.5h2.500v-2.500M12 1v2.500h2.500v-2.500" stroke="#333337" stroke-width="1" fill="none" /><path d="M8 .5l3.500 3.500h-2.200v2.500h-2.600v-2.500h-2.200z" fill="#333337"/><rect x="2" y="8" width="12" height="7.5" fill="#333337"/><rect x="3.2" y="9.5" width="1.6" height="1.6" fill="#fff"/><rect x="3.2" y="12.3" width="1.6" height="1.6" fill="#fff"/><rect x="6.0" y="9.5" width="1.6" height="1.6" fill="#fff"/><rect x="6.0" y="12.3" width="1.6" height="1.6" fill="#fff"/><rect x="8.8" y="9.5" width="1.6" height="1.6" fill="#fff"/><rect x="8.8" y="12.3" width="1.6" height="1.6" fill="#fff"/><rect x="11.599999999999998" y="9.5" width="1.6" height="1.6" fill="#fff"/><rect x="11.599999999999998" y="12.3" width="1.6" height="1.6" fill="#fff"/><rect x="8.8" y="12.3" width="1.6" height="1.6" fill="#8a1538"/></svg>
<span class="t" style="left:48px;top:308.84px;font-size:12px;line-height:16px;letter-spacing:-0.011px;">cWebColumnDate</span>
<svg class="i" style="left:25.0px;top:329.0px;" width="16" height="16" viewBox="0 0 16 16"><path d="M1.5 1v2.5h2.500v-2.500M12 1v2.500h2.500v-2.500" stroke="#333337" stroke-width="1" fill="none" /><path d="M8 .5l3.500 3.500h-2.200v2.500h-2.600v-2.500h-2.200z" fill="#333337"/><rect x="3.5" y="8.5" width="9" height="6.5" fill="#fff" stroke="#333337" stroke-width="1.2"/><path d="M4 13l2.500-2.500l2 1.500l2-2l1.500 1.500" stroke="#333337" stroke-width="1" fill="none" /></svg>
<span class="t" style="left:48px;top:328.84px;font-size:12px;line-height:16px;letter-spacing:0.056px;">cWebColumnImage</span>
<svg class="i" style="left:25.0px;top:349.0px;" width="16" height="16" viewBox="0 0 16 16"><path d="M1.5 1v2.5h2.500v-2.500M12 1v2.500h2.500v-2.500" stroke="#333337" stroke-width="1" fill="none" /><path d="M8 .5l3.500 3.500h-2.200v2.500h-2.600v-2.500h-2.200z" fill="#333337"/><path d="M6 8.500h4M8 8.500v4.500" stroke="#333337" stroke-width="1.2" fill="none" /><path d="M4 14.500h8" stroke="#2d6aa8" stroke-width="1.2" fill="none" /></svg>
<span class="t" style="left:48px;top:348.84px;font-size:12px;line-height:16px;letter-spacing:0.084px;">cWebColumnLink</span>
<svg class="i" style="left:25.0px;top:369.0px;" width="16" height="16" viewBox="0 0 16 16"><path d="M1.5 1v2.5h2.500v-2.500M12 1v2.500h2.500v-2.500" stroke="#333337" stroke-width="1" fill="none" /><path d="M8 .5l3.500 3.500h-2.200v2.500h-2.600v-2.500h-2.200z" fill="#333337"/><rect x="4.5" y="8.5" width="7" height="2.5" fill="#fff" stroke="#333337" stroke-width="1"/><rect x="4.5" y="12" width="7" height="3" fill="#333337"/></svg>
<span class="t" style="left:48px;top:368.84px;font-size:12px;line-height:16px;letter-spacing:0.007px;">cWebColumnSuggestion</span>
<svg class="i" style="left:25.0px;top:389.0px;" width="16" height="16" viewBox="0 0 16 16"><rect x="1.5" y="1.5" width="10" height="13" fill="#fff" stroke="#333337" stroke-width="1.2"/><rect x="1.5" y="5" width="10" height="3" fill="#77777b"/><path d="M1.500 4.500h10M1.500 8.500h10M1.500 11.500h10" stroke="#333337" stroke-width="1" fill="none" /><rect x="11.5" y="1.5" width="3" height="3" fill="#fff" stroke="#333337" stroke-width="1"/></svg>
<span class="t" style="left:48px;top:388.84px;font-size:12px;line-height:16px;letter-spacing:0.095px;">cWebCombo</span>
<svg class="i" style="left:25.0px;top:409.0px;" width="16" height="16" viewBox="0 0 16 16"><path d="M2 15v-13h12v13" stroke="#77777b" stroke-width="2" fill="none" /><rect x="3.5" y="3.5" width="9" height="2.5" fill="#fff" stroke="#333337" stroke-width="1"/><path d="M6.500 3.500v2.500" stroke="#333337" stroke-width="1" fill="none" /><path d="M3.500 15v-8.500h9v8.500" stroke="#333337" stroke-width="1" fill="none" /></svg>
<span class="t" style="left:48px;top:408.84px;font-size:12px;line-height:16px;letter-spacing:-0.035px;">cWebCommandBar</span>
<svg class="i" style="left:25.0px;top:429.0px;" width="16" height="16" viewBox="0 0 16 16"><rect x="1.5" y="1.5" width="13" height="13" fill="#fff" stroke="#333337" stroke-width="1.2"/><path d="M1.500 5h13" stroke="#333337" stroke-width="1" fill="none" /><rect x="11.5" y="1.5" width="3" height="3.5" fill="#fff" stroke="#333337" stroke-width="1"/><rect x="2" y="5.5" width="12" height="8.5" fill="#333337"/><rect x="3.0" y="6.5" width="1.6" height="1.5" fill="#fff"/><rect x="3.0" y="9.1" width="1.6" height="1.5" fill="#fff"/><rect x="3.0" y="11.7" width="1.6" height="1.5" fill="#fff"/><rect x="5.8" y="6.5" width="1.6" height="1.5" fill="#fff"/><rect x="5.8" y="9.1" width="1.6" height="1.5" fill="#fff"/><rect x="5.8" y="11.7" width="1.6" height="1.5" fill="#fff"/><rect x="8.6" y="6.5" width="1.6" height="1.5" fill="#fff"/><rect x="8.6" y="9.1" width="1.6" height="1.5" fill="#fff"/><rect x="8.6" y="11.7" width="1.6" height="1.5" fill="#fff"/><rect x="11.399999999999999" y="6.5" width="1.6" height="1.5" fill="#fff"/><rect x="11.399999999999999" y="9.1" width="1.6" height="1.5" fill="#fff"/><rect x="11.399999999999999" y="11.7" width="1.6" height="1.5" fill="#fff"/><rect x="8.6" y="9.1" width="1.6" height="1.5" fill="#8a1538"/></svg>
<span class="t" style="left:48px;top:428.84px;font-size:12px;line-height:16px;letter-spacing:-0.150px;">cWebDateForm</span>
<svg class="i" style="left:25.0px;top:449.0px;" width="16" height="16" viewBox="0 0 16 16"><rect x="1.5" y="1.5" width="13" height="3" fill="#fff" stroke="#333337" stroke-width="1.2"/><path d="M10.500 2.500h3l-1.500 1.600z" fill="#333337"/><rect x="4.5" y="4.5" width="10" height="10" fill="#fff" stroke="#333337" stroke-width="1.2"/><rect x="6.0" y="6.5" width="1.2" height="1.2" fill="#333337"/><rect x="6.0" y="8.8" width="1.2" height="1.2" fill="#333337"/><rect x="6.0" y="11.1" width="1.2" height="1.2" fill="#333337"/><rect x="8.3" y="6.5" width="1.2" height="1.2" fill="#333337"/><rect x="8.3" y="8.8" width="1.2" height="1.2" fill="#333337"/><rect x="8.3" y="11.1" width="1.2" height="1.2" fill="#333337"/><rect x="10.6" y="6.5" width="1.2" height="1.2" fill="#333337"/><rect x="10.6" y="8.8" width="1.2" height="1.2" fill="#333337"/><rect x="10.6" y="11.1" width="1.2" height="1.2" fill="#333337"/><rect x="10.3" y="10.8" width="2.7" height="2.6" fill="#333337"/></svg>
<span class="t" style="left:48px;top:448.84px;font-size:12px;line-height:16px;letter-spacing:-0.225px;">cWebDatePicker</span>
<svg class="i" style="left:25.0px;top:469.0px;" width="16" height="16" viewBox="0 0 16 16"><path d="M6 2.500h8.500v12h-13v-12h1.500" stroke="#333337" stroke-width="1.1" fill="none" /><path d="M2.500 1.500h1.500l.5.500l.5-.500h1.500M4.500 2v9M2.500 11.500h1.500l.5-.500l.5.500h1.500" stroke="#333337" stroke-width="0.9" fill="none" /></svg>
<span class="t" style="left:48px;top:468.84px;font-size:12px;line-height:16px;letter-spacing:-0.142px;">cWebEdit</span>
<svg class="i" style="left:25.0px;top:489.0px;" width="16" height="16" viewBox="0 0 16 16"><path d="M2 3h4l1-1.500h7.500v9.500h-12.500z" fill="#d8b377"/><path d="M8 1.500h6.500v9.500h-1.500v-7.500h-5z" fill="#e6cb98"/><rect x="1.5" y="10.5" width="10" height="4" fill="#f4f4f8" stroke="#333337" stroke-width="1.2"/></svg>
<span class="t" style="left:48px;top:488.84px;font-size:12px;line-height:16px;letter-spacing:-0.101px;">cWebFileUploadForm</span>
<svg class="i" style="left:25.0px;top:509.0px;" width="16" height="16" viewBox="0 0 16 16"><path d="M2 3h4l1-1.500h7.500v9.500h-12.500z" fill="#d8b377"/><path d="M8 1.500h6.500v9.500h-1.500v-7.500h-5z" fill="#e6cb98"/><rect x="1.5" y="9.500" width="11" height="5" rx="2.500" fill="#f6f6f6" stroke="#3e3e42" stroke-width="1.200"/></svg>
<span class="t" style="left:48px;top:508.84px;font-size:12px;line-height:16px;letter-spacing:-0.026px;">cWebFileUploadButton</span>
<svg class="i" style="left:25.0px;top:529.0px;" width="16" height="16" viewBox="0 0 16 16"><rect x="5.5" y="6" width="9" height="4" fill="#fff" stroke="#333337" stroke-width="1.1"/><path d="M1.500 6h2M1.500 6v4h2" stroke="#333337" stroke-width="1" fill="none" /><path d="M3 3.500h1.200l.6.600l.6-.600h1.200M4.800 4v8M3 12.500h1.200l.6-.600l.6.600h1.200" stroke="#333337" stroke-width="0.9" fill="none" /></svg>
<span class="t" style="left:48px;top:528.84px;font-size:12px;line-height:16px;letter-spacing:-0.057px;">cWebForm</span>
<svg class="i" style="left:25.0px;top:549.0px;" width="16" height="16" viewBox="0 0 16 16"><rect x="1.5" y="1.5" width="13" height="13" fill="#fff" stroke="#333337" stroke-width="1.3"/><path d="M1.500 4.500h13M5 1.500v13" stroke="#333337" stroke-width="1.2" fill="none" /><rect x="5.5" y="5" width="9" height="9.5" fill="#333337"/><rect x="6.3" y="6.0" width="1.6" height="1.6" fill="#fff"/><rect x="6.3" y="8.9" width="1.6" height="1.6" fill="#fff"/><rect x="6.3" y="11.8" width="1.6" height="1.6" fill="#fff"/><rect x="9.1" y="6.0" width="1.6" height="1.6" fill="#fff"/><rect x="9.1" y="8.9" width="1.6" height="1.6" fill="#fff"/><rect x="9.1" y="11.8" width="1.6" height="1.6" fill="#fff"/><rect x="11.899999999999999" y="6.0" width="1.6" height="1.6" fill="#fff"/><rect x="11.899999999999999" y="8.9" width="1.6" height="1.6" fill="#fff"/><rect x="11.899999999999999" y="11.8" width="1.6" height="1.6" fill="#fff"/></svg>
<span class="t" style="left:48px;top:548.84px;font-size:12px;line-height:16px;letter-spacing:-0.141px;">cWebGrid</span>
<svg class="i" style="left:25.0px;top:569.0px;" width="16" height="16" viewBox="0 0 16 16"><rect x="1.5" y="1.5" width="13" height="12" fill="#fff" stroke="#333337" stroke-width="1.3"/><path d="M6.500 4.500l-2.500 2.500l2.500 2.500M9.500 4.500l2.500 2.500l-2.500 2.500" stroke="#77777b" stroke-width="1.2" fill="none" /></svg>
<span class="t" style="left:48px;top:568.84px;font-size:12px;line-height:16px;letter-spacing:0.109px;">cWebHtmlBox</span>
<svg class="i" style="left:25.0px;top:589.0px;" width="16" height="16" viewBox="0 0 16 16"><path d="M1 8.500h14" stroke="#333337" stroke-width="1.2" fill="none" /></svg>
<span class="t" style="left:48px;top:588.84px;font-size:12px;line-height:16px;letter-spacing:-0.009px;">cWebHorizontalLine</span>
<svg class="i" style="left:25.0px;top:609.0px;" width="16" height="16" viewBox="0 0 16 16"><rect x="1.5" y="1.5" width="13" height="13" fill="#fff" stroke="#333337" stroke-width="1.3"/><path d="M1.500 4h13M1.500 12h13" stroke="#333337" stroke-width="1" fill="none" /><path d="M6.500 5.800l-2 2.200l2 2.200M9.500 5.800l2 2.200l-2 2.200" stroke="#88888c" stroke-width="1.1" fill="none" /></svg>
<span class="t" style="left:48px;top:608.84px;font-size:12px;line-height:16px;letter-spacing:-0.246px;">cWebIFrame</span>
<svg class="i" style="left:25.0px;top:629.0px;" width="16" height="16" viewBox="0 0 16 16"><rect x="1.5" y="1.5" width="13" height="13" fill="#fff" stroke="#333337" stroke-width="1.6"/><path d="M2 12l3.500-5l3 3.500l2.500-2.500l3 3v3h-12z" fill="#fff"/><path d="M2 10.500l3.500-4.500l3 3.500l2.500-2.500l3 3" stroke="#333337" stroke-width="1.5" fill="none" /><circle cx="10.5" cy="5" r="1.1" fill="#333337"/></svg>
<span class="t" style="left:48px;top:628.84px;font-size:12px;line-height:16px;letter-spacing:-0.090px;">cWebImage</span>
<svg class="i" style="left:25.0px;top:649.0px;" width="16" height="16" viewBox="0 0 16 16"><path d="M1.500 1.500h13v2.500h-5.200v10.500h-2.600v-10.500h-5.200z" stroke="#2d6aa8" stroke-width="1.2" fill="#fff" /></svg>
<span class="t" style="left:48px;top:648.84px;font-size:12px;line-height:16px;letter-spacing:-0.202px;">cWebLabel</span>
<svg class="i" style="left:25.0px;top:669.0px;" width="16" height="16" viewBox="0 0 16 16"><rect x="1.5" y="1.5" width="13" height="13" fill="#fff" stroke="#333337" stroke-width="1.3"/><rect x="2" y="5" width="9" height="3" fill="#3a5a9a"/><path d="M1.500 4.500h13M1.500 8.500h13M1.500 11.500h13M11 1.500v13" stroke="#333337" stroke-width="1" fill="none" /><rect x="11.5" y="5" width="3" height="3.5" fill="#c8c8cc"/><rect x="12.3" y="2.4" width="1.2" height="1.2" fill="#333337"/><rect x="12.3" y="12.4" width="1.2" height="1.2" fill="#333337"/></svg>
<span class="t" style="left:48px;top:668.84px;font-size:12px;line-height:16px;letter-spacing:-0.141px;">cWebList</span>
<svg class="i" style="left:25.0px;top:689.0px;" width="16" height="16" viewBox="0 0 16 16"><path d="M1.5 1v2.5h2.500v-2.500M12 1v2.500h2.500v-2.500" stroke="#333337" stroke-width="1" fill="none" /><path d="M8 .5l3.500 3.500h-2.200v2.500h-2.600v-2.500h-2.200z" fill="#333337"/><rect x="2.5" y="9.500" width="11" height="5" rx="2.500" fill="#f6f6f6" stroke="#3e3e42" stroke-width="1.100"/></svg>
<span class="t" style="left:48px;top:688.84px;font-size:12px;line-height:16px;letter-spacing:-0.079px;">cWebListSwipeButton</span>
<svg class="i" style="left:25.0px;top:709.0px;" width="16" height="16" viewBox="0 0 16 16"><rect x="1" y="1" width="14" height="3.5" fill="#333337"/><rect x="2.2" y="2" width="2.5" height="1.4" fill="#fff"/><rect x="5.8" y="2" width="2.5" height="1.4" fill="#fff"/><rect x="8.5" y="4.5" width="6" height="10" fill="#fff" stroke="#333337" stroke-width="1.3"/><rect x="9" y="5" width="5" height="2.6" fill="#3a5a9a"/><rect x="9" y="10.5" width="5" height="2" fill="#3a5a9a"/><path d="M8.500 8.500h6M8.500 12.500h6" stroke="#333337" stroke-width="1" fill="none" /></svg>
<span class="t" style="left:48px;top:708.84px;font-size:12px;line-height:16px;letter-spacing:-0.104px;">cWebMenuBar</span>
<svg class="i" style="left:25.0px;top:729.0px;" width="16" height="16" viewBox="0 0 16 16"><rect x="1.500" y="2" width="9" height="4.500" rx="2.200" fill="none" stroke="#3e3e42" stroke-width="1.200"/><path d="M10.500 4.500h2v2.500" stroke="#333337" stroke-width="1.1" fill="none" /><rect x="8.5" y="7.5" width="6" height="7.5" fill="#fff" stroke="#333337" stroke-width="1.3"/><rect x="9" y="10.5" width="5" height="2.6" fill="#3a5a9a"/></svg>
<span class="t" style="left:48px;top:728.84px;font-size:12px;line-height:16px;letter-spacing:0.131px;">cWebMenuButton</span>
<div class="b" style="left:293px;top:122px;width:17px;height:622px;background:#f2f2f2;"></div>
<div class="b" style="left:294px;top:139px;width:15px;height:298px;background:#c8c8c8;"></div>
<svg class="i" style="left:297.0px;top:126.0px;" width="9" height="9" viewBox="0 0 9 9"><path d="M1 6.5l3.5-3.5l3.5 3.5" stroke="#505050" stroke-width="1.6" fill="none" /></svg>
<svg class="i" style="left:297.0px;top:729.0px;" width="9" height="9" viewBox="0 0 9 9"><path d="M1 2.5l3.5 3.5l3.5-3.5" stroke="#505050" stroke-width="1.6" fill="none" /></svg>
<div class="b" style="left:0px;top:744px;width:310px;height:23px;background:#eeeef2;"></div>
<div class="b" style="left:3px;top:744px;width:99px;height:21px;background:#efeff2;border:1px solid #e0e0e4;border-top:none;"></div>
<div class="b" style="left:102px;top:744px;width:99px;height:21px;background:#efeff2;border:1px solid #e0e0e4;border-top:none;"></div>
<div class="b" style="left:202px;top:743px;width:104px;height:23px;background:#fdfdfd;border:1px solid #e0e0e4;border-top:none;"></div>
<svg class="i" style="left:7.0px;top:746.5px;" width="16" height="16" viewBox="0 0 16 16"><path d="M6.500 1.500h9v7.500M4 3.500h9.500v5M2.500 5.500h9" stroke="#333337" stroke-width="1.1" fill="none" /><rect x="6.5" y="1" width="9.5" height="1.5" fill="#333337"/><rect x="4" y="3" width="10" height="1.3" fill="#333337"/><rect x="0.65" y="7.65" width="9.7" height="8.2" fill="#fafafc" stroke="#333337" stroke-width="1.3"/><rect x="0.65" y="7.15" width="9.7" height="2.2" fill="#2d2d30"/><path d="M.650 11.700h9.700M.650 13.800h9.700M3.800 9.500v6.500M7 9.500v6.500" stroke="#333337" stroke-width="1" fill="none" /><circle cx="10.8" cy="9.8" r="2.4" fill="#eeeef2" stroke="#333337" stroke-width="1.2"/><path d="M12.500 11.500l2.600 2.800" stroke="#333337" stroke-width="1.6" fill="none" /></svg>
<span class="t" style="left:27px;top:745.84px;font-size:12px;line-height:16px;letter-spacing:-0.292px;">Table Explor...</span>
<svg class="i" style="left:107.0px;top:746.5px;" width="16" height="16" viewBox="0 0 16 16"><rect x="1.5" y="1.5" width="13" height="13" fill="#f8efe6" stroke="#333337" stroke-width="1.3"/><rect x="1.5" y="1.5" width="13" height="2.7" fill="#2d2d30"/><path d="M3.500 6.500l2-2l2.500 2l-2.500 2z" fill="#d19a2a"/><path d="M8.500 10l2-1.500l1.500 1.500l-1.500 1.500z" fill="#d6a83c"/><path d="M6.500 8v2.500h2M10.500 8v-1.500h-1.500M10.500 11.500v1.500" stroke="#c9a04a" stroke-width="1" fill="none" /><circle cx="10.5" cy="12.5" r="1.2" fill="#d6a83c"/></svg>
<span class="t" style="left:127px;top:745.84px;font-size:12px;line-height:16px;letter-spacing:-0.241px;">Code Explor...</span>
<svg class="i" style="left:206.0px;top:746.5px;" width="16" height="16" viewBox="0 0 16 16"><path d="M8.500 .8c3 0 5.500.7 5.300 2.200c-.2 1.500-2.500 1.800-4.300 3c-1 1 .5 2.300 2 2.300c1.500 0 3.800-1.500 3.800 .8c0 3-3.300 5.500-7.300 5.500c-4 0-7-3-7-6.900c0-3.900 3.500-6.900 7.500-6.900z" fill="#303034"/><circle cx="6.5" cy="3" r="1" fill="#f2f2f6"/><circle cx="3.7" cy="4.8" r="1" fill="#f2f2f6"/><circle cx="2.6" cy="7.8" r="1" fill="#f2f2f6"/><circle cx="3.7" cy="10.7" r="1" fill="#f2f2f6"/><circle cx="6.5" cy="12.3" r="1" fill="#f2f2f6"/></svg>
<span class="t" style="left:225px;top:745.84px;font-size:12px;line-height:16px;letter-spacing:-0.356px;">Class Palette...</span>
<div class="b hdr" style="left:0px;top:771px;width:310px;height:20px;"></div>
<span class="t" style="left:4px;top:773.84px;font-size:12px;line-height:16px;letter-spacing:-0.073px;">File Navigator</span>
<svg class="i" style="left:279.0px;top:776.0px;" width="10" height="10" viewBox="0 0 10 10"><path d="M3.5 1.5v4.5M6.5 1.5v4.5M3 1.5h4M2 6.5h6M5 6.5v3.5" stroke="#1e1e1e" stroke-width="1" fill="none" /><rect x="5.5" y="1.5" width="1.3" height="4.5" fill="#1e1e1e"/></svg>
<svg class="i" style="left:295.5px;top:775.5px;" width="10" height="10" viewBox="0 0 10 10"><path d="M1.5 1.5l7 7M8.5 1.5l-7 7" stroke="#1e1e1e" stroke-width="1.2" fill="none" /></svg>
<div class="b" style="left:0px;top:791px;width:310px;height:228px;background:#fff;border:1px solid #9ba6b5;border-top:none;border-bottom:none;"></div>
<svg class="i" style="left:7.0px;top:794.0px;" width="16" height="16" viewBox="0 0 16 16"><path d="M2.500 1.500h5.500l3 3v9h-8.500z" stroke="#333337" stroke-width="1.2" fill="#fff" /><path d="M8 1.500v3h3" stroke="#333337" stroke-width="1" fill="none" /><rect x="4" y="4.5" width="2.5" height="1" fill="#333337"/><rect x="4" y="7" width="5" height="1" fill="#333337"/><rect x="4" y="9.5" width="3" height="1" fill="#333337"/><rect x="4" y="12" width="2.5" height="1" fill="#333337"/><rect x="8" y="9" width="7" height="6.5" fill="#1b5fa8"/><rect x="9.5" y="9" width="3.5" height="2.2" fill="#fff"/></svg>
<span class="t" style="left:27px;top:793.84px;font-size:12px;line-height:16px;letter-spacing:-0.261px;font-weight:bold;">ExpandPanelDemo.wo</span>
<div class="b" style="left:318px;top:104px;width:151px;height:18px;background:#0b7bcb;"></div>
<span class="t" style="left:324px;top:104.84px;font-size:12px;line-height:16px;letter-spacing:-0.092px;color:#fff;">ExpandPanelDemo.wo*</span>
<svg class="i" style="left:455.2px;top:107.5px;" width="10" height="10" viewBox="0 0 10 10"><path d="M1.200 1.200l7.600 7.600M8.800 1.200l-7.600 7.600" stroke="#fff" stroke-width="1.900" fill="none"/></svg>
<div class="b" style="left:316px;top:122px;width:1309px;height:1px;background:#2e6f9e;"></div>
<svg class="i" style="left:1568px;top:104px" width="58" height="16" viewBox="0 0 58 16"><path d="M9.5 4l-4 3.5l4 3.5z" fill="none" stroke="#b0b0b4" stroke-width="1"/><path d="M19.5 4l4 3.5l-4 3.5z" fill="none" stroke="#b0b0b4" stroke-width="1"/><path d="M30 6h8l-4 4z" fill="#555"/><path d="M44 2.5l9 9M53 2.5l-9 9" stroke="#444" stroke-width="1.3" fill="none"/></svg>
<div class="b" style="left:316px;top:123px;width:1293px;height:682px;background:#fff;"></div>
<div class="b" style="left:316px;top:123px;width:24px;height:682px;background:#dcdcea;"></div>
<div class="b" style="left:316px;top:123px;width:2px;height:682px;background:#e9e9f1;"></div>
<div class="b code" style="left:344px;top:125px;width:1264px;height:679px;overflow:hidden"><div class="ln">078                 <span class="k">Set</span> Server <span class="k">to</span> oOrderHeader_DD</div><div class="ln">079                 <span class="k">Set</span> psCSSClass <span class="k">to</span> <span class="q">"</span><span class="s">MobileList</span><span class="q">"</span></div><div class="ln">080                 <span class="k">Set</span> piColumnSpan <span class="k">to</span> 0</div><div class="ln">081                 <span class="k">Set</span> piLimitRows <span class="k">to</span> 4</div><div class="ln">082                 <span class="k">Set</span> pbShowSelected <span class="k">to</span> <span class="k">False</span></div><div class="ln">083</div><div class="ln">084                 <span class="k">Object</span> oOrderHeaderOrderNumber <span class="k">is a</span> cWebColumn</div><div class="ln">085                     <span class="k">Entry_Item</span> OrderHeader.Order_Number</div><div class="ln">086                     <span class="k">Set</span> psCaption <span class="k">to</span> <span class="q">"</span><span class="s">Order Number</span><span class="q">"</span></div><div class="ln">087                     <span class="k">Set</span> piWidth <span class="k">to</span> 50</div><div class="ln">088                     <span class="k">Set</span> psCSSClass <span class="k">to</span> <span class="q">"</span><span class="s">RowCaption</span><span class="q">"</span></div><div class="ln">089                     <span class="k">Set</span> peAlign <span class="k">to</span> alignLeft</div><div class="ln">090                 <span class="k">End_Object</span></div><div class="ln">091</div><div class="ln">092                 <span class="k">Object</span> oOrderDate <span class="k">is a</span> cWebColumn</div><div class="ln">093                     <span class="k">Entry_Item</span> OrderHeader.Order_Date</div><div class="ln">094                     <span class="k">Set</span> psCaption <span class="k">to</span> <span class="q">"</span><span class="s">Order Date</span><span class="q">"</span></div><div class="ln">095                     <span class="k">Set</span> piWidth <span class="k">to</span> 50</div><div class="ln">096                     <span class="k">Set</span> psCSSClass <span class="k">to</span> <span class="q">"</span><span class="s">RowCaption</span><span class="q">"</span></div><div class="ln">097                     <span class="k">Set</span> pbFixedWidth <span class="k">to</span> <span class="k">True</span></div><div class="ln">098                 <span class="k">End_Object</span></div><div class="ln">099</div><div class="ln">100                 <span class="k">Object</span> OrderHeaderOrderTotal <span class="k">is a</span> cWebColumn</div><div class="ln">101                     <span class="k">Entry_Item</span> OrderHeader.Order_Total</div><div class="ln">102                     <span class="k">Set</span> psCaption <span class="k">to</span> <span class="q">"</span><span class="s">Order Total</span><span class="q">"</span></div><div class="ln">103                     <span class="k">Set</span> piWidth <span class="k">to</span> 50</div><div class="ln">104                     <span class="k">Set</span> peAlign <span class="k">to</span> alignRight</div><div class="ln">105                     <span class="k">Set</span> psCSSClass <span class="k">to</span> <span class="q">"</span><span class="s">RowCaption</span><span class="q">"</span></div><div class="ln">106                 <span class="k">End_Object</span></div><div class="ln">107</div><div class="ln">108                 <span class="k">Object</span> oSalesPerson <span class="k">is a</span> cWebColumn</div><div class="ln">109                     <span class="k">Entry_Item</span> SalesPerson.Name</div><div class="ln">110                     <span class="k">Set</span> psCaption <span class="k">to</span> <span class="q">"</span><span class="s">Sales Person</span><span class="q">"</span></div><div class="ln">111                     <span class="k">Set</span> piWidth <span class="k">to</span> 50</div><div class="ln">112                     <span class="k">Set</span> pbNewLine <span class="k">to</span> <span class="k">True</span></div><div class="ln">113                     <span class="k">Set</span> piListColSpan <span class="k">to</span> 3</div><div class="ln">114                     <span class="k">Set</span> psCSSClass <span class="k">to</span> <span class="q">"</span><span class="s">RowDetail</span></div><div class="ln">115                 <span class="k">End_Object</span></div></div>
<div class="b" style="left:760px;top:772px;width:2px;height:16px;background:#000;"></div>
<svg class="i" style="left:596px;top:662px" width="9" height="17" viewBox="0 0 9 17"><path d="M1.5 .5h2.2l.8.8l.8-.8h2.2M4.5 1.3v14.4M1.5 16.5h2.2l.8-.8l.8.8h2.2" stroke="#222" stroke-width="1" fill="none"/></svg>
<div class="b" style="left:1609px;top:123px;width:16px;height:682px;background:#f0f0f0;"></div>
<div class="b" style="left:1609px;top:123px;width:16px;height:7px;background:#cdcdd3;"></div>
<div class="b" style="left:1609px;top:547px;width:16px;height:192px;background:#c8c8c8;"></div>
<svg class="i" style="left:1612.0px;top:135.0px;" width="9" height="9" viewBox="0 0 9 9"><path d="M1 6.5l3.5-3.5l3.5 3.5" stroke="#505050" stroke-width="1.6" fill="none" /></svg>
<svg class="i" style="left:1612.0px;top:791.0px;" width="9" height="9" viewBox="0 0 9 9"><path d="M1 2.5l3.5 3.5l3.5-3.5" stroke="#505050" stroke-width="1.6" fill="none" /></svg>
<div class="b" style="left:316px;top:805px;width:1293px;height:16px;background:#f0f0f0;"></div>
<div class="b" style="left:318px;top:805px;width:8px;height:16px;background:#d2d2d6;"></div>
<div class="b" style="left:338px;top:805px;width:893px;height:16px;background:#c8c8c8;"></div>
<svg class="i" style="left:327.0px;top:808.0px;" width="9" height="9" viewBox="0 0 9 9"><path d="M6.5 1l-3.5 3.5l3.5 3.5" stroke="#505050" stroke-width="1.6" fill="none" /></svg>
<svg class="i" style="left:1595.0px;top:808.0px;" width="9" height="9" viewBox="0 0 9 9"><path d="M2.5 1l3.5 3.5l-3.5 3.5" stroke="#505050" stroke-width="1.6" fill="none" /></svg>
<div class="b" style="left:1609px;top:805px;width:16px;height:16px;background:#f0f0f0;"></div>
<div class="b" style="left:656px;top:790px;width:296px;height:21px;background:#ffffe1;border:1px solid #767676;box-shadow:2px 2px 3px rgba(0,0,0,.35);"></div>
<span class="t" style="left:663px;top:792.84px;font-size:12px;line-height:16px;letter-spacing:-0.076px;">Property </span>
<span class="t" style="left:711px;top:792.84px;font-size:12px;line-height:16px;letter-spacing:-0.747px;font-weight:bold;">String psCSSClass</span>
<span class="t" style="left:810px;top:792.84px;font-size:12px;line-height:16px;letter-spacing:0.153px;">// { WebProperty=Client }</span>
<div class="b hdr" style="left:314px;top:827px;width:1313px;height:20px;"></div>
<span class="t" style="left:318px;top:829.84px;font-size:12px;line-height:16px;letter-spacing:-0.004px;">Output</span>
<svg class="i" style="left:1596.0px;top:832.0px;" width="10" height="10" viewBox="0 0 10 10"><path d="M3.5 1.5v4.5M6.5 1.5v4.5M3 1.5h4M2 6.5h6M5 6.5v3.5" stroke="#1e1e1e" stroke-width="1" fill="none" /><rect x="5.5" y="1.5" width="1.3" height="4.5" fill="#1e1e1e"/></svg>
<svg class="i" style="left:1612.5px;top:831.5px;" width="10" height="10" viewBox="0 0 10 10"><path d="M1.5 1.5l7 7M8.5 1.5l-7 7" stroke="#1e1e1e" stroke-width="1.2" fill="none" /></svg>
<svg class="i" style="left:320.0px;top:852.0px;" width="16" height="16" viewBox="0 0 16 16"><circle cx="10.5" cy="8.5" r="3.3" fill="none" stroke="#333337" stroke-width="1.3"/><path d="M8.200 11l-3.500 3.500" stroke="#333337" stroke-width="1.8" fill="none" /><path d="M3 4h4.500" stroke="#10508f" stroke-width="2" fill="none" /><path d="M4.300 .8l-3.500 3.200l3.500 3.200z" fill="#10508f"/></svg>
<svg class="i" style="left:342.0px;top:852.0px;" width="16" height="16" viewBox="0 0 16 16"><circle cx="10.5" cy="8.5" r="3.3" fill="none" stroke="#333337" stroke-width="1.3"/><path d="M8.200 11l-3.500 3.500" stroke="#333337" stroke-width="1.8" fill="none" /><path d="M1 4h4" stroke="#10508f" stroke-width="2" fill="none" /><path d="M4.200 .8l3.500 3.200l-3.500 3.200z" fill="#10508f"/></svg>
<div class="sep" style="left:362px;top:851px;height:19px"></div>
<svg class="i" style="left:369.0px;top:852.0px;" width="16" height="16" viewBox="0 0 16 16"><path d="M6.500 4v-2.500h4.500l2.500 2.500v6h-3" stroke="#333337" stroke-width="1.2" fill="none" /><path d="M2.500 5.500h4.500l2.500 2.500v6.500h-7z" stroke="#333337" stroke-width="1.2" fill="#f2f2f6" /><path d="M7 5.500v2.500h2.500" stroke="#333337" stroke-width="1" fill="none" /></svg>
<svg class="i" style="left:390.0px;top:852.0px;" width="16" height="16" viewBox="0 0 16 16"><path d="M1.500 2.500l2-1.500l5 4.800l5.500-5l1 .8l-5.200 5.700l5.200 5.500l-.8.800l-6-4.700l-4.700 4.800l-2.200-1.700l5-5z" fill="#a3151a"/></svg>
<div class="sep" style="left:412px;top:851px;height:19px"></div>
<svg class="i" style="left:419.0px;top:852.0px;" width="16" height="16" viewBox="0 0 16 16"><path d="M1.500 9v-7.500h7.500M3.300 11v-7.700h7.700" stroke="#333337" stroke-width="1" fill="none" /><rect x="5.15" y="5.15" width="7.7" height="7.7" fill="#f4f8fc" stroke="#333337" stroke-width="1.3"/><path d="M6.800 9h4.400M9 6.800v4.400" stroke="#1f5f9f" stroke-width="1.4" fill="none" /></svg>
<svg class="i" style="left:441.0px;top:852.0px;" width="16" height="16" viewBox="0 0 16 16"><path d="M1.500 9v-7.500h7.500M3.300 11v-7.700h7.700" stroke="#333337" stroke-width="1" fill="none" /><rect x="5.15" y="5.15" width="7.7" height="7.7" fill="#f4f8fc" stroke="#333337" stroke-width="1.3"/><path d="M6.800 9h4.400" stroke="#1f5f9f" stroke-width="1.4" fill="none" /></svg>
<div class="b" style="left:314px;top:873px;width:1313px;height:120px;background:#fff;border:1px solid #8e8e93;"></div>
<div class="b" style="left:1608px;top:874px;width:17px;height:118px;background:#f0f0f0;"></div>
<div class="b" style="left:1609px;top:957px;width:15px;height:18px;background:#c8c8c8;"></div>
<svg class="i" style="left:1612.0px;top:880.0px;" width="9" height="9" viewBox="0 0 9 9"><path d="M1 6.5l3.5-3.5l3.5 3.5" stroke="#505050" stroke-width="1.6" fill="none" /></svg>
<svg class="i" style="left:1612.0px;top:978.0px;" width="9" height="9" viewBox="0 0 9 9"><path d="M1 2.5l3.5 3.5l3.5-3.5" stroke="#505050" stroke-width="1.6" fill="none" /></svg>
<div class="b" style="left:327px;top:874px;width:1px;height:100px;background-image:linear-gradient(to bottom,#3a3a3a 50%,transparent 50%);background-size:1px 2px;"></div>
<div class="b" style="left:342px;top:874px;width:1px;height:64px;background-image:linear-gradient(to bottom,#3a3a3a 50%,transparent 50%);background-size:1px 2px;"></div>
<div class="b" style="left:343px;top:884px;width:6px;height:1px;background-image:linear-gradient(to right,#3a3a3a 50%,transparent 50%);background-size:2px 1px;"></div>
<svg class="i" style="left:353.0px;top:878.0px;" width="12" height="12" viewBox="0 0 12 12"><path d="M1.5 1l7 5l-7 5z" fill="#fff" stroke="#555" stroke-width="1.100"/></svg>
<div class="b" style="left:343px;top:902px;width:6px;height:1px;background-image:linear-gradient(to right,#3a3a3a 50%,transparent 50%);background-size:2px 1px;"></div>
<svg class="i" style="left:353.0px;top:896.0px;" width="12" height="12" viewBox="0 0 12 12"><path d="M1.5 1l7 5l-7 5z" fill="#fff" stroke="#555" stroke-width="1.100"/></svg>
<div class="b" style="left:343px;top:920px;width:6px;height:1px;background-image:linear-gradient(to right,#3a3a3a 50%,transparent 50%);background-size:2px 1px;"></div>
<svg class="i" style="left:353.0px;top:914.0px;" width="12" height="12" viewBox="0 0 12 12"><path d="M1.5 1l7 5l-7 5z" fill="#fff" stroke="#555" stroke-width="1.100"/></svg>
<div class="b" style="left:343px;top:938px;width:6px;height:1px;background-image:linear-gradient(to right,#3a3a3a 50%,transparent 50%);background-size:2px 1px;"></div>
<svg class="i" style="left:353.0px;top:932.0px;" width="12" height="12" viewBox="0 0 12 12"><path d="M1.5 1l7 5l-7 5z" fill="#fff" stroke="#555" stroke-width="1.100"/></svg>
<div class="b" style="left:328px;top:956px;width:7px;height:1px;background-image:linear-gradient(to right,#3a3a3a 50%,transparent 50%);background-size:2px 1px;"></div>
<div class="b" style="left:328px;top:974px;width:7px;height:1px;background-image:linear-gradient(to right,#3a3a3a 50%,transparent 50%);background-size:2px 1px;"></div>
<span class="t" style="left:371px;top:875.84px;font-size:12px;line-height:16px;letter-spacing:-0.299px;">Total Pages    : 0</span>
<span class="t" style="left:371px;top:893.84px;font-size:12px;line-height:16px;letter-spacing:-0.380px;">Static Data    : 333585</span>
<span class="t" style="left:371px;top:911.84px;font-size:12px;line-height:16px;letter-spacing:-0.468px;">Message area   : 208782</span>
<span class="t" style="left:371px;top:929.84px;font-size:12px;line-height:16px;letter-spacing:-0.276px;">Total Blocks   : 13220</span>
<svg class="i" style="left:335.0px;top:948.0px;" width="16" height="16" viewBox="0 0 16 16"><circle cx="8" cy="8" r="7" fill="#2b2b2e"/><rect x="5" y="5" width="6" height="6" fill="#fff"/><rect x="6.3" y="6.3" width="3.4" height="3.4" fill="#2b2b2e"/></svg>
<span class="t" style="left:356px;top:947.84px;font-size:12px;line-height:16px;letter-spacing:0.305px;">----Compile Finished----</span>
<div class="b" style="left:354px;top:965px;width:211px;height:18px;background:#f0f0f0;"></div>
<svg class="i" style="left:335.0px;top:966.0px;" width="16" height="16" viewBox="0 0 16 16"><circle cx="8" cy="8" r="7.3" fill="#1e8ad6"/><rect x="7.1" y="6.8" width="1.8" height="5.4" fill="#fff"/><circle cx="8" cy="4.5" r="1.1" fill="#fff"/></svg>
<span class="t" style="left:356px;top:965.84px;font-size:12px;line-height:16px;letter-spacing:-0.033px;">Starting web application: WebListDemo</span>
<div class="b" style="left:316px;top:993px;width:68px;height:24px;background:#fcfcfc;border:1px solid #dcdce0;border-top:none;"></div>
<div class="b" style="left:386px;top:995px;width:150px;height:21px;background:#eeeef2;border:1px solid #e0e0e4;border-top:none;"></div>
<div class="b" style="left:538px;top:995px;width:89px;height:21px;background:#eeeef2;border:1px solid #e0e0e4;border-top:none;"></div>
<div class="b" style="left:630px;top:995px;width:87px;height:21px;background:#eeeef2;border:1px solid #e0e0e4;border-top:none;"></div>
<div class="b" style="left:720px;top:995px;width:202px;height:21px;background:#eeeef2;border:1px solid #e0e0e4;border-top:none;"></div>
<svg class="i" style="left:319.0px;top:998.0px;" width="16" height="16" viewBox="0 0 16 16"><path d="M9.500 1.500h-8v13h8" stroke="#333337" stroke-width="1.3" fill="none" /><path d="M4 8h7" stroke="#333337" stroke-width="2.2" fill="none" /><path d="M8.800 4l6.200 4l-6.200 4l1.500-4z" fill="#333337"/></svg>
<span class="t" style="left:338px;top:997.84px;font-size:12px;line-height:16px;letter-spacing:0.329px;">Output</span>
<svg class="i" style="left:387.0px;top:997.0px;" width="16" height="16" viewBox="0 0 16 16"><rect x="3.5" y="4.5" width="9" height="10" fill="#f8f8fa" stroke="#333337" stroke-width="1.3"/><path d="M6 4.500c0-3.500 4-3.500 4 0" stroke="#333337" stroke-width="1.3" fill="none" /><path d="M5.800 9.500l2.200 2.800l4.600-6.800" stroke="#222" stroke-width="1.7" fill="none" /></svg>
<span class="t" style="left:406px;top:996.84px;font-size:12px;line-height:16px;letter-spacing:-0.109px;">To Do List [WebApp.src]</span>
<svg class="i" style="left:540.0px;top:997.0px;" width="16" height="16" viewBox="0 0 16 16"><path d="M4.500 8v-5.500h5.500l3.500 3.500v8.500h-4" stroke="#333337" stroke-width="1.2" fill="#f8f8fa" /><path d="M10 2.500l3.500 3.500h-3.500z" fill="#333337"/><circle cx="6.5" cy="10.5" r="2.3" fill="#eaf2fb" stroke="#2a6aa8" stroke-width="1.3"/><path d="M4.800 12.200l-2.500 2.500" stroke="#2a6aa8" stroke-width="1.5" fill="none" /></svg>
<span class="t" style="left:560px;top:996.84px;font-size:12px;line-height:16px;letter-spacing:-0.308px;">Find Results</span>
<svg class="i" style="left:631.0px;top:997.0px;" width="16" height="16" viewBox="0 0 16 16"><path d="M3.650 4v-2.350h11.700v10h-4" stroke="#2d2d30" stroke-width="1.3" fill="none" /><rect x="3" y="1" width="13" height="2.7" fill="#2d2d30"/><circle cx="5.5" cy="10.5" r="4.3" fill="#d60505"/></svg>
<span class="t" style="left:651px;top:996.84px;font-size:12px;line-height:16px;letter-spacing:-0.124px;">Breakpoints</span>
<svg class="i" style="left:722.0px;top:997.0px;" width="16" height="16" viewBox="0 0 16 16"><rect x="0.5" y="1.5" width="15" height="13" fill="#fdfdfd" stroke="#333337" stroke-width="1.1"/><rect x="0.5" y="1.5" width="15" height="2.7" fill="#2d2d30"/><path d="M2 13.500l3.500-8l3.500 8z" fill="#efe33a"/><path d="M5.500 8.300v2.400M5.500 11.600v1.100" stroke="#222" stroke-width="1.3" fill="none" /><path d="M9.800 8.800l1.800 2.200l3.200-5" stroke="#222" stroke-width="1.7" fill="none" /></svg>
<span class="t" style="left:741px;top:996.84px;font-size:12px;line-height:16px;letter-spacing:-0.028px;">Problem Resolution [WebApp.src]</span>
<div class="b hdr" style="left:1631px;top:101px;width:289px;height:20px;"></div>
<span class="t" style="left:1635px;top:103.84px;font-size:12px;line-height:16px;letter-spacing:-0.212px;">Workspace Explorer</span>
<svg class="i" style="left:1889.0px;top:106.0px;" width="10" height="10" viewBox="0 0 10 10"><path d="M3.5 1.5v4.5M6.5 1.5v4.5M3 1.5h4M2 6.5h6M5 6.5v3.5" stroke="#1e1e1e" stroke-width="1" fill="none" /><rect x="5.5" y="1.5" width="1.3" height="4.5" fill="#1e1e1e"/></svg>
<svg class="i" style="left:1905.5px;top:105.5px;" width="10" height="10" viewBox="0 0 10 10"><path d="M1.5 1.5l7 7M8.5 1.5l-7 7" stroke="#1e1e1e" stroke-width="1.2" fill="none" /></svg>
<span class="t" style="left:1636px;top:129.84px;font-size:12px;line-height:16px;letter-spacing:-0.002px;">Current Project:</span>
<div class="b" style="left:1726px;top:126px;width:193px;height:24px;background:#e2e2e2;border:1px solid #adadad;"></div>
<span class="t" style="left:1731px;top:129.84px;font-size:12px;line-height:16px;letter-spacing:-0.114px;">WebApp.src</span>
<svg class="i" style="left:1904px;top:135px" width="10" height="6" viewBox="0 0 10 6"><path d="M.8 .8l4.2 4.2l4.2-4.2" stroke="#444" stroke-width="1.1" fill="none"/></svg>
<div class="b" style="left:1631px;top:154px;width:289px;height:307px;background:#fff;border:1px solid #8e8e93;border-top:2px solid #8e8e93;"></div>
<svg class="i" style="left:1640.0px;top:162.0px;" width="9" height="9" viewBox="0 0 9 9"><rect x=".5" y=".5" width="8" height="8" rx="1" fill="#e6e6e8" stroke="#9a9a9e"/><rect x="1" y="1" width="7" height="3" fill="#f6f6f8"/><path d="M2.5 4.5h4M4.5 2.5v4" stroke="#2a3a7a" stroke-width="1" fill="none" /></svg>
<div class="b" style="left:1650px;top:166px;width:3px;height:1px;background-image:linear-gradient(to right,#3a3a3a 50%,transparent 50%);background-size:2px 1px;"></div>
<svg class="i" style="left:1651.0px;top:157.0px;" width="16" height="16" viewBox="0 0 16 16"><path d="M2.600 6v-4h12.800v10.200h-5.500" stroke="#333337" stroke-width="1.2" fill="none" /><rect x="2" y="1.2" width="14" height="2.6" fill="#2d2d30"/><circle cx="5.3" cy="11.2" r="4.2" fill="#fff" stroke="#333337" stroke-width="1.3"/><path d="M1.100 11.200h8.400M5.300 7v8.400" stroke="#333337" stroke-width="0.8" fill="none" /><ellipse cx="5.300" cy="11.200" rx="2" ry="4.200" fill="none" stroke="#333337" stroke-width=".7"/></svg>
<span class="t" style="left:1673px;top:156.84px;font-size:12px;line-height:16px;letter-spacing:-0.114px;">WebApp.src</span>
<div class="b hdr" style="left:1631px;top:466px;width:289px;height:20px;"></div>
<span class="t" style="left:1635px;top:468.84px;font-size:12px;line-height:16px;letter-spacing:-0.205px;">DDO Explorer [ExpandPanelDemo.wo]</span>
<svg class="i" style="left:1889.0px;top:471.0px;" width="10" height="10" viewBox="0 0 10 10"><path d="M3.5 1.5v4.5M6.5 1.5v4.5M3 1.5h4M2 6.5h6M5 6.5v3.5" stroke="#1e1e1e" stroke-width="1" fill="none" /><rect x="5.5" y="1.5" width="1.3" height="4.5" fill="#1e1e1e"/></svg>
<svg class="i" style="left:1905.5px;top:470.5px;" width="10" height="10" viewBox="0 0 10 10"><path d="M1.5 1.5l7 7M8.5 1.5l-7 7" stroke="#1e1e1e" stroke-width="1.2" fill="none" /></svg>
<svg class="i" style="left:1636.0px;top:491.0px;" width="16" height="16" viewBox="0 0 16 16"><rect x="1.65" y="5.15" width="12.7" height="8.7" fill="#fafafc" stroke="#2a2a2e" stroke-width="1.3"/><rect x="7" y="5" width="2.2" height="9.5" fill="#2a2a2e"/><rect x="0" y="0" width="6.5" height="6.8" fill="#eeeef2"/><path d="M3.200 1v5M.7 3.500h5" stroke="#2e8f2e" stroke-width="1.8" fill="none" /></svg>
<svg class="i" style="left:1658.0px;top:491.0px;" width="16" height="16" viewBox="0 0 16 16"><path d="M1.5 8.4v4.7c0 1.800 6.5 1.800 6.5 0v-4.7z" fill="#88888c"/><ellipse cx="4.75" cy="8.5" rx="3.25" ry="1.500" fill="#88888c"/><path d="M2.3 9.2c1.500 1.200 3.4 1.200 4.9 0" stroke="#d8d8dc" stroke-width=".9" fill="none"/><rect x="8.5" y="1.5" width="2.7" height="3.7" fill="none" stroke="#8a8a8e" stroke-width="1.1"/><rect x="11.7" y="1.5" width="2.7" height="3.7" fill="none" stroke="#8a8a8e" stroke-width="1.1"/><path d="M5.500 1.500h-3v3" stroke="#8a8a8e" stroke-width="1.2" fill="none" /><path d="M.8 4h3.400l-1.700 2.300z" fill="#8a8a8e"/><path d="M14 9.500v3.500h-2.500" stroke="#8a8a8e" stroke-width="1.2" fill="none" /><path d="M12 11v4l-2.300-2z" fill="#8a8a8e"/></svg>
<svg class="i" style="left:1680.0px;top:491.0px;" width="16" height="16" viewBox="0 0 16 16"><rect x="3.5" y="2" width="11.5" height="9" fill="#f4f4f6" stroke="#8a8a8e" stroke-width="1.2"/><path d="M9.25 2v9" stroke="#8a8a8e" stroke-width="1.2" fill="none" /><circle cx="4.8" cy="11.2" r="4.2" fill="#77777b" stroke="#eeeef2" stroke-width="0.8"/><text x="4.8" y="13.5" font-family="Liberation Sans, sans-serif" font-size="7.5" font-weight="bold" fill="#fff" text-anchor="middle">m</text></svg>
<div class="sep" style="left:1701px;top:489px;height:20px"></div>
<svg class="i" style="left:1708.0px;top:491.0px;" width="16" height="16" viewBox="0 0 16 16"><rect x="1.65" y="3.65" width="12.7" height="9.7" fill="#f4f4f6" stroke="#8a8a8e" stroke-width="1.2"/><path d="M8.0 3.65v9.7" stroke="#8a8a8e" stroke-width="1.2" fill="none" /><rect x="1" y="1" width="6" height="4" fill="#eeeef2"/><path d="M1.500 2.500h5" stroke="#77777b" stroke-width="1.6" fill="none" /></svg>
<svg class="i" style="left:1730.0px;top:491.0px;" width="16" height="16" viewBox="0 0 16 16"><rect x="6.65" y="1.65" width="5.7" height="3.7" fill="#fff" stroke="#2a2a2e" stroke-width="1.3"/><rect x="6.65" y="1.15" width="5.7" height="1.5" fill="#2a2a2e"/><path d="M9.500 5.500v2.500M5 10.500v-2.500h8v2.500" stroke="#2a2a2e" stroke-width="1.3" fill="none" /><rect x="2.15" y="10.65" width="5.2" height="3.7" fill="#fff" stroke="#2a2a2e" stroke-width="1.4"/><rect x="9.65" y="10.65" width="5.2" height="3.7" fill="#fff" stroke="#2a2a2e" stroke-width="1.4"/><path d="M.8 .5l4.700 5M5.500 .5l-4.700 5" stroke="#b01c22" stroke-width="1.5" fill="none" /></svg>
<div class="sep" style="left:1751px;top:489px;height:20px"></div>
<svg class="i" style="left:1758.0px;top:491.0px;" width="16" height="16" viewBox="0 0 16 16"><rect x="7.15" y="1.15" width="6.7" height="4.7" fill="#f4f4f6" stroke="#808084" stroke-width="1.2"/><rect x="7.15" y="1.15" width="6.7" height="1.8" fill="#808084"/><rect x="1.65" y="8.65" width="6.7" height="4.7" fill="#f4f4f6" stroke="#808084" stroke-width="1.2"/><rect x="1.65" y="8.65" width="6.7" height="1.8" fill="#808084"/><path d="M11.500 6v5h-3" stroke="#808084" stroke-width="1.2" fill="none" /><path d="M.5 3.500h5M3 1v5" stroke="#808084" stroke-width="1.7" fill="none" /></svg>
<svg class="i" style="left:1780.0px;top:491.0px;" width="16" height="16" viewBox="0 0 16 16"><rect x="7.15" y="1.15" width="6.7" height="4.7" fill="#f4f4f6" stroke="#808084" stroke-width="1.2"/><rect x="7.15" y="1.15" width="6.7" height="1.8" fill="#808084"/><rect x="1.65" y="8.65" width="6.7" height="4.7" fill="#f4f4f6" stroke="#808084" stroke-width="1.2"/><rect x="1.65" y="8.65" width="6.7" height="1.8" fill="#808084"/><path d="M11.500 6v5h-3" stroke="#808084" stroke-width="1.2" fill="none" /><path d="M.5 3.500h5.500" stroke="#808084" stroke-width="1.7" fill="none" /></svg>
<div class="b" style="left:1631px;top:516px;width:287px;height:477px;background:#fff;border:1px solid #8e8e93;"></div>
<svg class="i" style="left:1640.0px;top:524.0px;" width="9" height="9" viewBox="0 0 9 9"><rect x=".5" y=".5" width="8" height="8" rx="1" fill="#e6e6e8" stroke="#9a9a9e"/><rect x="1" y="1" width="7" height="3" fill="#f6f6f8"/><path d="M2.5 4.5h4" stroke="#2a3a7a" stroke-width="1" fill="none" /></svg>
<div class="b" style="left:1644px;top:534px;width:1px;height:62px;background-image:linear-gradient(to bottom,#3a3a3a 50%,transparent 50%);background-size:1px 2px;"></div>
<div class="b" style="left:1659px;top:536px;width:1px;height:42px;background-image:linear-gradient(to bottom,#3a3a3a 50%,transparent 50%);background-size:1px 2px;"></div>
<div class="b" style="left:1650px;top:528px;width:3px;height:1px;background-image:linear-gradient(to right,#3a3a3a 50%,transparent 50%);background-size:2px 1px;"></div>
<svg class="i" style="left:1652.0px;top:519.0px;" width="16" height="16" viewBox="0 0 16 16"><rect x="5.65" y="1.65" width="4.7" height="3.7" fill="#fff" stroke="#333337" stroke-width="1.3"/><rect x="5.65" y="1.15" width="4.7" height="1.5" fill="#333337"/><path d="M8 5.500v2.500M3.500 10.500v-2.500h9v2.500" stroke="#333337" stroke-width="1.3" fill="none" /><rect x="1.15" y="10.65" width="4.7" height="3.7" fill="#fff" stroke="#333337" stroke-width="1.3"/><rect x="10.15" y="10.65" width="4.7" height="3.7" fill="#fff" stroke="#333337" stroke-width="1.3"/></svg>
<span class="t" style="left:1673px;top:518.84px;font-size:12px;line-height:16px;letter-spacing:-0.241px;font-weight:bold;">DDOs for oExpandPanelDemo</span>
<div class="b" style="left:1660px;top:545px;width:7px;height:1px;background-image:linear-gradient(to right,#3a3a3a 50%,transparent 50%);background-size:2px 1px;"></div>
<svg class="i" style="left:1667.0px;top:536.0px;" width="16" height="16" viewBox="0 0 16 16"><rect x="1.65" y="3.65" width="12.7" height="9.2" fill="#fff" stroke="#2a2a2e" stroke-width="1.3"/><path d="M8.0 3.65v9.2" stroke="#2a2a2e" stroke-width="1.3" fill="none" /><rect x="7.2" y="3.5" width="1.6" height="10.3" fill="#2a2a2e"/></svg>
<span class="t" style="left:1688px;top:536.84px;font-size:12px;line-height:16px;letter-spacing:-0.259px;">cSalesPersonDataDictionary</span>
<div class="b" style="left:1660px;top:563px;width:7px;height:1px;background-image:linear-gradient(to right,#3a3a3a 50%,transparent 50%);background-size:2px 1px;"></div>
<svg class="i" style="left:1667.0px;top:555.0px;" width="16" height="16" viewBox="0 0 16 16"><rect x="1.65" y="2.65" width="12.7" height="9.2" fill="#fff" stroke="#2a2a2e" stroke-width="1.3"/><path d="M8.0 2.65v9.2" stroke="#2a2a2e" stroke-width="1.3" fill="none" /><circle cx="4.2" cy="11.8" r="4.8" fill="#fff"/><circle cx="4.2" cy="11.8" r="4.1" fill="#2a2a2e"/><text x="4.2" y="14" font-family="Liberation Sans, sans-serif" font-size="7.5" font-weight="bold" fill="#fff" text-anchor="middle">m</text></svg>
<span class="t" style="left:1688px;top:554.84px;font-size:12px;line-height:16px;letter-spacing:-0.021px;">cCustomerDataDictionary [Main DDO]</span>
<svg class="i" style="left:1655.0px;top:577.0px;" width="9" height="9" viewBox="0 0 9 9"><rect x=".5" y=".5" width="8" height="8" rx="1" fill="#e6e6e8" stroke="#9a9a9e"/><rect x="1" y="1" width="7" height="3" fill="#f6f6f8"/><path d="M2.5 4.5h4M4.5 2.5v4" stroke="#2a3a7a" stroke-width="1" fill="none" /></svg>
<svg class="i" style="left:1667.0px;top:572.0px;" width="16" height="16" viewBox="0 0 16 16"><rect x="1.65" y="3.65" width="12.7" height="9.2" fill="#fff" stroke="#2a2a2e" stroke-width="1.3"/><path d="M8.0 3.65v9.2" stroke="#2a2a2e" stroke-width="1.3" fill="none" /><rect x="7.2" y="3.5" width="1.6" height="10.3" fill="#2a2a2e"/></svg>
<div class="b" style="left:1688px;top:572px;width:225px;height:18px;overflow:hidden"><span class="t" style="left:0px;top:0.84px;font-size:12px;line-height:16px;letter-spacing:0.013px;">cOrderHeaderDataDictionary [Constrained to</span></div>
<svg class="i" style="left:1640.0px;top:595.0px;" width="9" height="9" viewBox="0 0 9 9"><rect x=".5" y=".5" width="8" height="8" rx="1" fill="#e6e6e8" stroke="#9a9a9e"/><rect x="1" y="1" width="7" height="3" fill="#f6f6f8"/><path d="M2.5 4.5h4M4.5 2.5v4" stroke="#2a3a7a" stroke-width="1" fill="none" /></svg>
<div class="b" style="left:1650px;top:599px;width:3px;height:1px;background-image:linear-gradient(to right,#3a3a3a 50%,transparent 50%);background-size:2px 1px;"></div>
<svg class="i" style="left:1652.0px;top:591.0px;" width="16" height="16" viewBox="0 0 16 16"><rect x="5.65" y="1.65" width="4.7" height="3.7" fill="#fff" stroke="#333337" stroke-width="1.3"/><rect x="5.65" y="1.15" width="4.7" height="1.5" fill="#333337"/><path d="M8 5.500v2.500M3.500 10.500v-2.500h9v2.500" stroke="#333337" stroke-width="1.3" fill="none" /><rect x="1.15" y="10.65" width="4.7" height="3.7" fill="#fff" stroke="#333337" stroke-width="1.3"/><rect x="10.15" y="10.65" width="4.7" height="3.7" fill="#fff" stroke="#333337" stroke-width="1.3"/></svg>
<span class="t" style="left:1673px;top:590.84px;font-size:12px;line-height:16px;letter-spacing:-0.176px;font-weight:bold;">DDO Column Selector</span>
<div class="b" style="left:1633px;top:974px;width:284px;height:17px;background:#f0f0f0;"></div>
<div class="b" style="left:1650px;top:975px;width:160px;height:15px;background:#c8c8c8;"></div>
<svg class="i" style="left:1637.0px;top:978.0px;" width="9" height="9" viewBox="0 0 9 9"><path d="M6.5 1l-3.5 3.5l3.5 3.5" stroke="#505050" stroke-width="1.6" fill="none" /></svg>
<svg class="i" style="left:1902.0px;top:978.0px;" width="9" height="9" viewBox="0 0 9 9"><path d="M2.5 1l3.5 3.5l-3.5 3.5" stroke="#505050" stroke-width="1.6" fill="none" /></svg>
<div class="b" style="left:1633px;top:995px;width:131px;height:21px;background:#eeeef2;border:1px solid #e0e0e4;border-top:none;"></div>
<div class="b" style="left:1765px;top:993px;width:151px;height:24px;background:#fcfcfc;border:1px solid #dcdce0;border-top:none;"></div>
<svg class="i" style="left:1638.0px;top:997.0px;" width="16" height="16" viewBox="0 0 16 16"><rect x="4.65" y="1.15" width="9.7" height="13.2" fill="#fafafc" stroke="#333337" stroke-width="1.3"/><path d="M6.500 3.500h2M10.500 3.500h2.500M6.500 5.500h2M10.500 5.500h2.500M6.500 7.500h2M10.500 7.500h2.500M6.500 9.500h2M10.500 9.500h2.500M6.500 11.500h2M10.500 11.500h2.500" stroke="#444448" stroke-width="1" fill="none" /><path d="M1.500 7v2.500M4 7v2.500" stroke="#222" stroke-width="1.4" fill="none" /><path d="M1 9h3.500v1.500l-.800.800v3.200l-1 .5l-1-.5v-3.200l-.700-.800z" fill="#222"/></svg>
<span class="t" style="left:1657px;top:996.84px;font-size:12px;line-height:16px;letter-spacing:-0.161px;">Properties (Inactive)</span>
<svg class="i" style="left:1769.0px;top:998.0px;" width="16" height="16" viewBox="0 0 16 16"><path d="M7.500 2v8c0 1.500 7.500 1.500 7.500 0v-8z" fill="#2f2f33"/><ellipse cx="11.250" cy="2.200" rx="3.700" ry="1.400" fill="#606064" stroke="#eeeef2" stroke-width=".6"/><rect x="4" y="5.7" width="2.6" height="2.6" fill="#2f2f33" stroke="#eeeef2" stroke-width="0.6"/><path d="M5.300 8v2.500M1.800 13v-2.500h7.400v2.500" stroke="#2f2f33" stroke-width="1.3" fill="none" /><rect x="0.5" y="12.3" width="2.8" height="2.2" fill="#2f2f33"/><rect x="7.7" y="12.3" width="2.8" height="2.2" fill="#2f2f33"/></svg>
<span class="t" style="left:1788px;top:997.84px;font-size:12px;line-height:16px;letter-spacing:-0.290px;">DDO Explorer [Expan...</span>
<div class="b" style="left:0px;top:1018px;width:1920px;height:22px;background:#0e7acb;"></div>
<span class="t" style="left:3px;top:1021.84px;font-size:12px;line-height:16px;letter-spacing:0.002px;color:#fff;">C:\projects\WebListDemo\AppSrc\ExpandPanelDemo.wo</span>
<span class="t" style="left:1537px;top:1021.84px;font-size:12px;line-height:16px;letter-spacing:-0.302px;color:#fff;">Ln 114</span>
<span class="t" style="left:1583px;top:1021.84px;font-size:12px;line-height:16px;letter-spacing:-0.281px;color:#fff;">Col 49</span>
<svg class="i" style="left:1759.0px;top:1021.5px;" width="16" height="16" viewBox="0 0 16 16"><circle cx="8" cy="8" r="6.800" fill="none" stroke="#fff" stroke-width="1.300"/><circle cx="8" cy="8" r="5.300" fill="none" stroke="#aeb2b8" stroke-width="1.700"/><path d="M4.300 4.300l7.400 7.400" stroke="#aeb2b8" stroke-width="2"/></svg>
<span class="t" style="left:1793px;top:1021.84px;font-size:12px;line-height:16px;letter-spacing:-0.668px;color:#fff;">INS</span>
<span class="t" style="left:1837px;top:1021.84px;font-size:12px;line-height:16px;letter-spacing:-0.919px;color:#6fb7ea;">CAPS</span>
<span class="t" style="left:1881px;top:1021.84px;font-size:12px;line-height:16px;letter-spacing:0.224px;color:#fff;">NUM</span>
<div class="b" style="left:0px;top:1040px;width:1920px;height:40px;background:#1d4590;"></div>
<div class="b" style="left:196px;top:1040px;width:48px;height:40px;background:#2c58a8;"></div>
<div class="b" style="left:151px;top:1078px;width:40px;height:2px;background:#86a3d4;"></div>
<div class="b" style="left:196px;top:1078px;width:48px;height:2px;background:#9db6e2;"></div>
<div class="b" style="left:249px;top:1078px;width:40px;height:2px;background:#86a3d4;"></div>
<svg class="i" style="left:16.0px;top:1052.0px;" width="16" height="16" viewBox="0 0 16 16"><path d="M0 2.300l6.500-.9v6.100h-6.500z M7.500 1.300l8.500-1.200v7.400h-8.500z M0 8.500h6.500v6.100l-6.500-.9z M7.500 8.500h8.500v7.400l-8.500-1.200z" fill="#fff"/></svg>
<svg class="i" style="left:63.0px;top:1051.0px;" width="18" height="18" viewBox="0 0 18 18"><circle cx="11" cy="7" r="5" fill="none" stroke="#fff" stroke-width="1.5"/><path d="M7.500 10.500l-6 6" stroke="#fff" stroke-width="1.5" fill="none" /></svg>
<svg class="i" style="left:110.0px;top:1050.0px;" width="19" height="19" viewBox="0 0 19 19"><rect x="3.65" y="5.65" width="9.7" height="6.7" fill="none" stroke="#fff" stroke-width="1.3"/><path d="M2.500 1.500v1.500h12v-1.500M2.500 16.500v-1.500h12v1.500" stroke="#fff" stroke-width="1.2" fill="none" /><path d="M17.500 1.500v3M17.500 9.500v7" stroke="#fff" stroke-width="1.3" fill="none" /><rect x="16" y="5.5" width="3" height="3" fill="#fff"/></svg>
<svg class="i" style="left:159.0px;top:1048.0px;" width="24" height="24" viewBox="0 0 24 24"><circle cx="12" cy="12" r="11.5" fill="#fff"/><path d="M12 .5a11.500 11.500 0 0 1 10 5.800h-10a5.700 5.700 0 0 0-5.300 3.200l-4.600-4.500a11.500 11.500 0 0 1 9.900-4.500z" fill="#dd4b3e"/><path d="M22 6.300a11.500 11.500 0 0 1-10.500 17.200l5.500-8.600a5.700 5.700 0 0 0 0-6z" fill="#f7cf45"/><path d="M11.500 23.500a11.500 11.500 0 0 1-9.400-18.500l5 8.800a5.700 5.700 0 0 0 7.300 3.500z" fill="#3aaa55"/><circle cx="12" cy="12" r="5.2" fill="#eef3fb"/><circle cx="12" cy="12" r="4.1" fill="#5288e0"/></svg>
<svg class="i" style="left:207.750px;top:1047.800px" width="24.500" height="24" viewBox="0 0 24.500 24"><rect x="0" y="0" width="24.5" height="24" fill="#dc3d0e"/><text x="12" y="17.500" font-family="Liberation Sans, sans-serif" font-size="15" font-weight="bold" fill="#fff" text-anchor="middle" letter-spacing="-1.2">DF</text></svg>
<svg class="i" style="left:256.8px;top:1048.0px;" width="24" height="24" viewBox="0 0 24 24"><path d="M1 2h7l1.500 1.500h-8.500z" fill="#d9a928"/><path d="M1 3.500h21v16.500h-21z" fill="#f6d568"/><rect x="1" y="3.5" width="21" height="1.5" fill="#e9bd3e"/><rect x="4.5" y="11" width="14" height="9" fill="#4f9bd0"/><rect x="4.5" y="11" width="14" height="2" fill="#6fb4e0"/><rect x="8" y="15" width="7" height="5" fill="#f0cf5e"/></svg>
</div>
</body></html>
